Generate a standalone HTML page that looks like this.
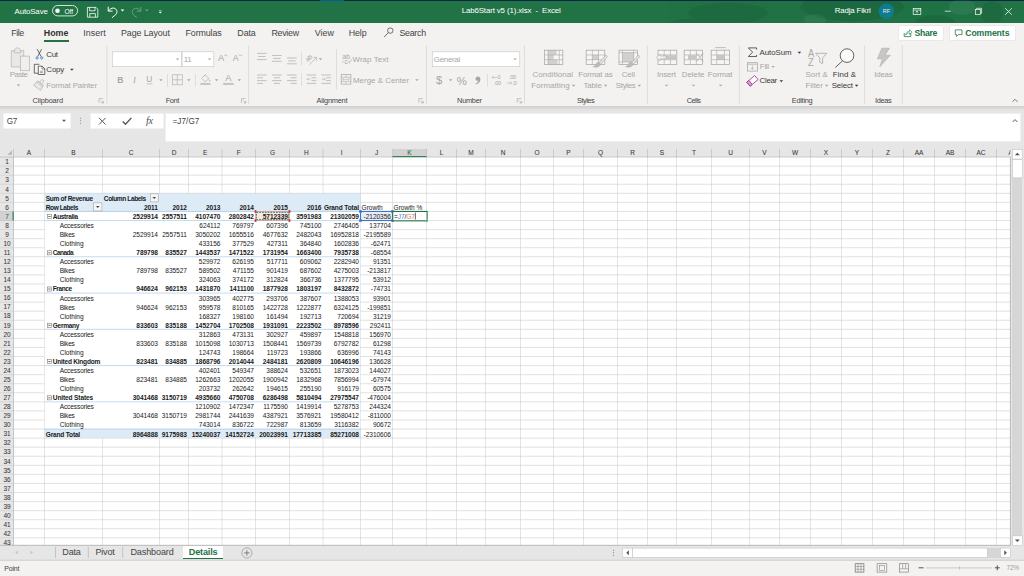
<!DOCTYPE html>
<html><head><meta charset="utf-8"><title>Lab6Start v5 (1).xlsx - Excel</title>
<style>
html,body{margin:0;padding:0;background:#fff;overflow:hidden}
#app{position:relative;width:1024px;height:576px;overflow:hidden;background:#e6e6e6;font-family:"Liberation Sans",sans-serif}
.t{position:absolute;white-space:pre}
.b{position:absolute}
#ov{position:absolute;left:0;top:0;width:1024px;height:576px;pointer-events:none}
</style></head><body>
<div id="app">
<div class="b" style="left:0.00px;top:0.00px;width:1024.00px;height:1.00px;background:#06294a;"></div>
<div class="b" style="left:320.00px;top:0.00px;width:23.70px;height:1.00px;background:#0a5aa0;"></div>
<div class="b" style="left:0.00px;top:0.90px;width:1024.00px;height:21.90px;background:#217346;"></div>
<div class="b" style="left:0.00px;top:22.80px;width:1024.00px;height:82.80px;background:#f3f2f1;"></div>
<div class="b" style="left:0.00px;top:105.60px;width:1024.00px;height:51.40px;background:#e6e6e6;"></div>
<div class="b" style="left:0.00px;top:105.80px;width:1024.00px;height:5.70px;background:linear-gradient(#cdcdcd,#dbdbdb 45%,#e6e6e6);"></div>
<div class="b" style="left:43.50px;top:40.00px;width:25.90px;height:1.90px;background:#217346;"></div>
<div class="b" style="left:899.10px;top:26.00px;width:44.20px;height:14.30px;background:#fff;border-radius:1px;box-shadow:0 0 0 0.5px #e1dfdd"></div>
<div class="b" style="left:949.80px;top:26.00px;width:65.60px;height:14.30px;background:#fff;border-radius:1px;box-shadow:0 0 0 0.5px #e1dfdd"></div>
<div class="b" style="left:13.50px;top:157.05px;width:996.90px;height:388.25px;background:#fff;"></div>
<div class="b" style="left:44.50px;top:193.32px;width:316.00px;height:18.13px;background:#ddebf7;"></div>
<div class="b" style="left:44.50px;top:429.05px;width:316.00px;height:9.07px;background:#ddebf7;"></div>
<div class="b" style="left:392.50px;top:148.60px;width:34.00px;height:8.45px;background:#d2d2d2;"></div>
<div class="b" style="left:0.00px;top:211.45px;width:13.50px;height:9.07px;background:#d2d2d2;"></div>
<div class="b" style="left:360.50px;top:211.45px;width:32.00px;height:9.07px;background:#e8eef9;"></div>
<div class="b" style="left:1012.40px;top:149.40px;width:9.90px;height:395.90px;background:#d6d6d6;"></div>
<div class="b" style="left:622.30px;top:548.00px;width:388.10px;height:9.50px;background:#d6d6d6;"></div>
<div class="b" style="left:0.00px;top:560.50px;width:1024.00px;height:15.50px;background:#f3f2f1;"></div>
<div class="b" style="left:182.50px;top:545.70px;width:40.90px;height:13.50px;background:#fff;"></div>
<div class="b" style="left:182.50px;top:558.00px;width:40.90px;height:1.30px;background:#217346;"></div>
<svg id="ov" viewBox="0 0 1024 576">
<svg x="0" y="0" width="1024" height="22.8" viewBox="0 0 1024 22.8"><g opacity="0.075" fill="#000"><ellipse cx="728" cy="13" rx="40" ry="10.5"/><ellipse cx="852" cy="7" rx="52" ry="14"/><ellipse cx="935" cy="23" rx="20" ry="8"/><ellipse cx="992" cy="13" rx="11" ry="12"/><ellipse cx="700" cy="24" rx="30" ry="6"/></g>
<g opacity="0.05" fill="#fff"><ellipse cx="815" cy="20" rx="11" ry="6"/><ellipse cx="962" cy="7" rx="13" ry="8"/></g></svg>
<rect x="52.50" y="5.50" width="25.10" height="10.40" fill="none" stroke="#ffffff" stroke-width="0.80" rx="5.2"/>
<circle cx="57.50" cy="10.75" r="2.30" fill="#ffffff" stroke="none" stroke-width="0.55" />
<path d="M87.4 7.4h8.6l1.8 1.8v8h-10.4z" fill="none" stroke="#ffffff" stroke-width="0.80" />
<path d="M89.6 7.4v3.4h5.4v-3.4" fill="none" stroke="#ffffff" stroke-width="0.80" />
<path d="M89.8 17.2v-3.6h5.6v3.6" fill="none" stroke="#ffffff" stroke-width="0.80" />
<path d="M108.2 6.7v4.4h4.4" fill="none" stroke="#ffffff" stroke-width="1.00" />
<path d="M108.6 10.9c1.6-2.8 5.2-3.8 7.2-1.8c2 2 1.2 4.6-0.8 6.2l-3 2.4" fill="none" stroke="#ffffff" stroke-width="1.00" />
<path d="M120.70 9.40 h3.60 l-1.80 2.00 z" fill="#ffffff" stroke="none" stroke-width="0.55" />
<g opacity="0.35">
<path d="M140.8 6.9v4.2h-4.2" fill="none" stroke="#ffffff" stroke-width="0.90" />
<path d="M140.4 10.9c-1.6-2.6-5-3.6-7-1.6c-2 2-1.2 4.6 0.8 6.2l2.6 2" fill="none" stroke="#ffffff" stroke-width="0.90" />
<path d="M145.00 9.40 h3.60 l-1.80 2.00 z" fill="#ffffff" stroke="none" stroke-width="0.55" />
</g>
<line x1="158.90" y1="10.90" x2="161.70" y2="10.90" stroke="#ffffff" stroke-width="0.70" />
<path d="M158.90 12.05 h2.80 l-1.40 1.50 z" fill="#ffffff" stroke="none" stroke-width="0.55" />
<circle cx="886.40" cy="11.30" r="7.80" fill="#0e7c8c" stroke="none" stroke-width="0.55" />
<rect x="913.20" y="8.40" width="7.60" height="6.10" fill="none" stroke="#ffffff" stroke-width="0.70" />
<line x1="913.20" y1="10.10" x2="920.80" y2="10.10" stroke="#ffffff" stroke-width="0.70" />
<path d="M917 13.6v-2.6m-1.2 1.2l1.2-1.2l1.2 1.2" fill="none" stroke="#ffffff" stroke-width="0.60" />
<line x1="944.80" y1="11.20" x2="950.80" y2="11.20" stroke="#ffffff" stroke-width="0.70" />
<rect x="975.30" y="9.60" width="5.00" height="5.00" fill="none" stroke="#ffffff" stroke-width="0.70" />
<path d="M976.6 9.6v-1.3h5v5h-1.3" fill="none" stroke="#ffffff" stroke-width="0.70" />
<path d="M1005.2 8.2l6.6 6.6m0-6.6l-6.6 6.6" fill="none" stroke="#ffffff" stroke-width="0.75" />
<circle cx="390.30" cy="30.60" r="2.70" fill="none" stroke="#444444" stroke-width="0.75" />
<line x1="388.40" y1="32.60" x2="384.20" y2="37.00" stroke="#444444" stroke-width="0.75" />
<path d="M904.2 33v3.6h6.6v-3.2" fill="none" stroke="#217346" stroke-width="0.75" />
<path d="M905.6 35.2c0.4-2.6 2-3.8 4-3.9v-1.6l2.4 2.4l-2.4 2.4v-1.6c-1.6 0-3 0.6-4 2.3z" fill="none" stroke="#217346" stroke-width="0.60" />
<path d="M955.3 29.9h6.7v4.7h-3.6l-1.8 1.8v-1.8h-1.3z" fill="none" stroke="#217346" stroke-width="0.75" />
<line x1="106.90" y1="45.30" x2="106.90" y2="103.80" stroke="#d0cecc" stroke-width="0.60" />
<line x1="248.60" y1="45.30" x2="248.60" y2="103.80" stroke="#d0cecc" stroke-width="0.60" />
<line x1="426.50" y1="45.30" x2="426.50" y2="103.80" stroke="#d0cecc" stroke-width="0.60" />
<line x1="524.50" y1="45.30" x2="524.50" y2="103.80" stroke="#d0cecc" stroke-width="0.60" />
<line x1="647.40" y1="45.30" x2="647.40" y2="103.80" stroke="#d0cecc" stroke-width="0.60" />
<line x1="739.40" y1="45.30" x2="739.40" y2="103.80" stroke="#d0cecc" stroke-width="0.60" />
<line x1="864.60" y1="45.30" x2="864.60" y2="103.80" stroke="#d0cecc" stroke-width="0.60" />
<line x1="902.30" y1="45.30" x2="902.30" y2="103.80" stroke="#d0cecc" stroke-width="0.60" />
<path d="M11.3 50.6h3.2c0.3-1.8 1.4-2.7 3-2.7s2.7 0.9 3 2.7h3.2v16.4h-12.4z" fill="#e9e8e7" stroke="#b4b2b0" stroke-width="0.70" />
<path d="M14.3 50.6v2.2h6.4v-2.2" fill="none" stroke="#b4b2b0" stroke-width="0.70" />
<rect x="20.60" y="56.10" width="9.00" height="14.60" fill="#f0efee" stroke="#b4b2b0" stroke-width="0.70" />
<path d="M16.80 84.55 h3.40 l-1.70 1.90 z" fill="#a6a6a6" stroke="none" stroke-width="0.55" />
<path d="M37.2 49.2l4 7.4M41.6 49.2l-4 7.4" fill="none" stroke="#3b3a39" stroke-width="0.75" />
<circle cx="37.10" cy="57.90" r="1.15" fill="none" stroke="#2b7cd3" stroke-width="0.80" />
<circle cx="41.70" cy="57.90" r="1.15" fill="none" stroke="#2b7cd3" stroke-width="0.80" />
<path d="M38 73.2h-3.7v-8.9h5" fill="none" stroke="#3b3a39" stroke-width="0.75" />
<path d="M38.3 66.2h3.9l2.6 2.6v5.7h-6.5z" fill="#fff" stroke="#3b3a39" stroke-width="0.75" />
<path d="M42 66.3v2.7h2.7" fill="none" stroke="#3b3a39" stroke-width="0.60" />
<line x1="39.80" y1="71.20" x2="43.20" y2="71.20" stroke="#3b3a39" stroke-width="0.50" />
<line x1="39.80" y1="72.70" x2="43.20" y2="72.70" stroke="#3b3a39" stroke-width="0.50" />
<path d="M70.10 68.70 h3.60 l-1.80 2.00 z" fill="#3b3a39" stroke="none" stroke-width="0.55" />
<g transform="translate(39.6,84.4) rotate(38)">
<rect x="-1.30" y="-5.40" width="2.60" height="3.80" fill="none" stroke="#b4b2b0" stroke-width="0.70" />
<path d="M-3.8 -1.6h7.6v2.2h-7.6z" fill="#dcdad8" stroke="#b4b2b0" stroke-width="0.70" />
<path d="M-3.8 0.6l-0.6 3.6h8.8l-0.6-3.6" fill="#eceae8" stroke="#b4b2b0" stroke-width="0.70" />
</g>
<path d="M99.00 102.80v-4.2h4.2" fill="none" stroke="#a19f9d" stroke-width="0.60" />
<path d="M100.80 100.40l2.6 2.6m0-2v2h-2" fill="none" stroke="#a19f9d" stroke-width="0.60" />
<rect x="112.50" y="51.80" width="68.80" height="14.90" fill="#fff" stroke="#c8c6c4" stroke-width="0.60" />
<rect x="182.10" y="51.80" width="31.70" height="14.90" fill="#fff" stroke="#c8c6c4" stroke-width="0.60" />
<path d="M175.80 58.45 h3.40 l-1.70 1.90 z" fill="#a6a6a6" stroke="none" stroke-width="0.55" />
<path d="M207.90 58.45 h3.40 l-1.70 1.90 z" fill="#a6a6a6" stroke="none" stroke-width="0.55" />
<path d="M224.3 56.2l1.5-1.5l1.5 1.5" fill="none" stroke="#a6a6a6" stroke-width="0.70" />
<path d="M239 54.6l1.5 1.5l1.5-1.5" fill="none" stroke="#a6a6a6" stroke-width="0.70" />
<line x1="146.50" y1="83.80" x2="152.50" y2="83.80" stroke="#a6a6a6" stroke-width="0.60" />
<path d="M159.20 79.35 h3.40 l-1.70 1.90 z" fill="#a6a6a6" stroke="none" stroke-width="0.55" />
<line x1="167.50" y1="74.00" x2="167.50" y2="86.50" stroke="#d0cecc" stroke-width="0.60" />
<rect x="172.30" y="74.80" width="10.00" height="10.00" fill="none" stroke="#b4b2b0" stroke-width="0.70" />
<line x1="177.30" y1="74.80" x2="177.30" y2="84.80" stroke="#b4b2b0" stroke-width="0.70" />
<line x1="172.30" y1="79.80" x2="182.30" y2="79.80" stroke="#b4b2b0" stroke-width="0.70" />
<path d="M187.10 79.35 h3.40 l-1.70 1.90 z" fill="#a6a6a6" stroke="none" stroke-width="0.55" />
<line x1="195.50" y1="74.00" x2="195.50" y2="86.50" stroke="#d0cecc" stroke-width="0.60" />
<path d="M205.2 74.8l3.8 3.8l-4 3.2l-3.4-3.4z" fill="none" stroke="#b4b2b0" stroke-width="0.75" />
<path d="M203.4 76.6l2.2-2.2" fill="none" stroke="#b4b2b0" stroke-width="0.70" />
<path d="M209.6 79.2c0.8 1 1 1.6 0.5 2.2c-0.5 0.4-1.1 0-1-0.8z" fill="#b4b2b0" stroke="none" stroke-width="0.55" />
<rect x="200.30" y="82.90" width="10.20" height="2.10" fill="#c8c6c4" stroke="none" stroke-width="0.55" />
<path d="M214.80 79.35 h3.40 l-1.70 1.90 z" fill="#a6a6a6" stroke="none" stroke-width="0.55" />
<rect x="223.10" y="82.90" width="10.50" height="2.10" fill="#c8c6c4" stroke="none" stroke-width="0.55" />
<path d="M237.60 79.35 h3.40 l-1.70 1.90 z" fill="#a6a6a6" stroke="none" stroke-width="0.55" />
<path d="M241.40 102.80v-4.2h4.2" fill="none" stroke="#a19f9d" stroke-width="0.60" />
<path d="M243.20 100.40l2.6 2.6m0-2v2h-2" fill="none" stroke="#a19f9d" stroke-width="0.60" />
<line x1="257.00" y1="53.40" x2="266.70" y2="53.40" stroke="#a8a6a4" stroke-width="0.65" />
<line x1="258.16" y1="56.50" x2="265.54" y2="56.50" stroke="#a8a6a4" stroke-width="0.65" />
<line x1="257.00" y1="59.60" x2="266.70" y2="59.60" stroke="#a8a6a4" stroke-width="0.65" />
<line x1="272.00" y1="55.50" x2="281.70" y2="55.50" stroke="#a8a6a4" stroke-width="0.65" />
<line x1="273.16" y1="58.40" x2="280.54" y2="58.40" stroke="#a8a6a4" stroke-width="0.65" />
<line x1="272.00" y1="61.30" x2="281.70" y2="61.30" stroke="#a8a6a4" stroke-width="0.65" />
<line x1="287.00" y1="58.00" x2="296.70" y2="58.00" stroke="#a8a6a4" stroke-width="0.65" />
<line x1="288.16" y1="60.90" x2="295.54" y2="60.90" stroke="#a8a6a4" stroke-width="0.65" />
<line x1="287.00" y1="63.80" x2="296.70" y2="63.80" stroke="#a8a6a4" stroke-width="0.65" />
<line x1="301.50" y1="52.50" x2="301.50" y2="65.30" stroke="#d0cecc" stroke-width="0.60" />
<g transform="translate(311.2,58.2) rotate(-45)">
<text x="-5.4" y="0.4" font-size="6.6" fill="#a8a6a4" font-family="Liberation Sans,sans-serif">ab</text>
</g>
<path d="M309.4 64.6l7-7m-3-0.2h3.2v3.2" fill="none" stroke="#a8a6a4" stroke-width="0.60" />
<path d="M318.80 58.25 h3.40 l-1.70 1.90 z" fill="#a6a6a6" stroke="none" stroke-width="0.55" />
<line x1="257.00" y1="75.00" x2="266.70" y2="75.00" stroke="#a8a6a4" stroke-width="0.65" />
<line x1="257.00" y1="77.80" x2="263.01" y2="77.80" stroke="#a8a6a4" stroke-width="0.65" />
<line x1="257.00" y1="80.60" x2="266.70" y2="80.60" stroke="#a8a6a4" stroke-width="0.65" />
<line x1="257.00" y1="83.40" x2="263.01" y2="83.40" stroke="#a8a6a4" stroke-width="0.65" />
<line x1="272.00" y1="75.00" x2="281.70" y2="75.00" stroke="#a8a6a4" stroke-width="0.65" />
<line x1="273.84" y1="77.80" x2="279.86" y2="77.80" stroke="#a8a6a4" stroke-width="0.65" />
<line x1="272.00" y1="80.60" x2="281.70" y2="80.60" stroke="#a8a6a4" stroke-width="0.65" />
<line x1="273.84" y1="83.40" x2="279.86" y2="83.40" stroke="#a8a6a4" stroke-width="0.65" />
<line x1="287.00" y1="75.00" x2="296.70" y2="75.00" stroke="#a8a6a4" stroke-width="0.65" />
<line x1="290.69" y1="77.80" x2="296.70" y2="77.80" stroke="#a8a6a4" stroke-width="0.65" />
<line x1="287.00" y1="80.60" x2="296.70" y2="80.60" stroke="#a8a6a4" stroke-width="0.65" />
<line x1="290.69" y1="83.40" x2="296.70" y2="83.40" stroke="#a8a6a4" stroke-width="0.65" />
<line x1="301.50" y1="73.40" x2="301.50" y2="85.90" stroke="#d0cecc" stroke-width="0.60" />
<line x1="306.80" y1="75.00" x2="316.20" y2="75.00" stroke="#a8a6a4" stroke-width="0.65" />
<line x1="306.80" y1="83.40" x2="316.20" y2="83.40" stroke="#a8a6a4" stroke-width="0.65" />
<line x1="311.40" y1="77.80" x2="316.20" y2="77.80" stroke="#a8a6a4" stroke-width="0.65" />
<line x1="311.40" y1="80.60" x2="316.20" y2="80.60" stroke="#a8a6a4" stroke-width="0.65" />
<path d="M310.40 79.2h-3.4m1.3-1.3l-1.3 1.3l1.3 1.3" fill="none" stroke="#a8a6a4" stroke-width="0.55" />
<line x1="321.50" y1="75.00" x2="330.90" y2="75.00" stroke="#a8a6a4" stroke-width="0.65" />
<line x1="321.50" y1="83.40" x2="330.90" y2="83.40" stroke="#a8a6a4" stroke-width="0.65" />
<line x1="326.10" y1="77.80" x2="330.90" y2="77.80" stroke="#a8a6a4" stroke-width="0.65" />
<line x1="326.10" y1="80.60" x2="330.90" y2="80.60" stroke="#a8a6a4" stroke-width="0.65" />
<path d="M321.70 79.2h3.4m-1.3-1.3l1.3 1.3l-1.3 1.3" fill="none" stroke="#a8a6a4" stroke-width="0.55" />
<line x1="336.50" y1="49.30" x2="336.50" y2="89.30" stroke="#d0cecc" stroke-width="0.60" />
<text x="342.6" y="59.2" font-size="6.6" fill="#a8a6a4" font-family="Liberation Sans,sans-serif">ab</text>
<text x="344.4" y="64.2" font-size="6.6" fill="#a8a6a4" font-family="Liberation Sans,sans-serif">c</text>
<path d="M350.4 58.6c1.6 1.4 0.8 3.6-1.6 3.6m1.2-1.2l-1.3 1.3l1.3 1.3" fill="none" stroke="#a8a6a4" stroke-width="0.55" />
<path d="M343.6 60.6l-1.3 1.3l1.3 1.3" fill="none" stroke="#a8a6a4" stroke-width="0.55" />
<rect x="341.20" y="74.50" width="9.70" height="9.60" fill="none" stroke="#a8a6a4" stroke-width="0.70" />
<line x1="341.20" y1="77.20" x2="350.90" y2="77.20" stroke="#a8a6a4" stroke-width="0.55" />
<line x1="341.20" y1="81.40" x2="350.90" y2="81.40" stroke="#a8a6a4" stroke-width="0.55" />
<line x1="346.00" y1="74.50" x2="346.00" y2="77.20" stroke="#a8a6a4" stroke-width="0.50" />
<line x1="346.00" y1="81.40" x2="346.00" y2="84.10" stroke="#a8a6a4" stroke-width="0.50" />
<path d="M342.6 79.3h6.8m-5.7-1l-1.1 1l1.1 1m4.6-2l1.1 1l-1.1 1" fill="none" stroke="#a8a6a4" stroke-width="0.50" />
<path d="M415.20 79.15 h3.40 l-1.70 1.90 z" fill="#a6a6a6" stroke="none" stroke-width="0.55" />
<path d="M418.80 102.80v-4.2h4.2" fill="none" stroke="#a19f9d" stroke-width="0.60" />
<path d="M420.60 100.40l2.6 2.6m0-2v2h-2" fill="none" stroke="#a19f9d" stroke-width="0.60" />
<rect x="432.30" y="51.80" width="87.50" height="14.90" fill="#fff" stroke="#c8c6c4" stroke-width="0.60" />
<path d="M513.30 58.45 h3.40 l-1.70 1.90 z" fill="#a6a6a6" stroke="none" stroke-width="0.55" />
<path d="M448.90 79.35 h3.40 l-1.70 1.90 z" fill="#a6a6a6" stroke="none" stroke-width="0.55" />
<path d="M477.9 76.4c1.6 0 2.5 1.1 2.5 2.9c0 2.4-1.6 4.4-4.6 5.1l-0.3-0.9c1.7-0.6 2.6-1.6 2.7-2.7c-1.4 0.3-2.7-0.6-2.7-2.1c0-1.3 1-2.3 2.4-2.3z" fill="#a6a6a6" stroke="none" stroke-width="0.55" />
<line x1="487.50" y1="74.00" x2="487.50" y2="86.50" stroke="#d0cecc" stroke-width="0.60" />
<g font-family="Liberation Sans,sans-serif" font-size="5.6" fill="#a8a6a4" letter-spacing="-0.35">
<text x="497.6" y="79.4">0</text><text x="494" y="84.9">.00</text>
<text x="509" y="79.4">.00</text><text x="512.4" y="84.9">.0</text>
</g>
<path d="M497 77.4h-4.8m1.4-1.4l-1.4 1.4l1.4 1.4" fill="none" stroke="#a8a6a4" stroke-width="0.55" />
<path d="M507 83h4.8m-1.4-1.4l1.4 1.4l-1.4 1.4" fill="none" stroke="#a8a6a4" stroke-width="0.55" />
<path d="M517.20 102.80v-4.2h4.2" fill="none" stroke="#a19f9d" stroke-width="0.60" />
<path d="M519.00 100.40l2.6 2.6m0-2v2h-2" fill="none" stroke="#a19f9d" stroke-width="0.60" />
<rect x="544.40" y="50.20" width="18.40" height="14.40" fill="#f7f6f5" stroke="none" stroke-width="0.55" />
<rect x="548.00" y="50.20" width="8.60" height="4.70" fill="#d2d0ce" stroke="none" stroke-width="0.55" />
<rect x="548.00" y="54.90" width="5.60" height="4.90" fill="#d2d0ce" stroke="none" stroke-width="0.55" />
<rect x="548.00" y="59.80" width="9.60" height="4.80" fill="#d2d0ce" stroke="none" stroke-width="0.55" />
<rect x="544.40" y="50.20" width="18.40" height="14.40" fill="none" stroke="#a8a6a4" stroke-width="0.75" />
<line x1="547.99" y1="50.20" x2="547.99" y2="64.60" stroke="#a8a6a4" stroke-width="0.60" />
<line x1="559.30" y1="50.20" x2="559.30" y2="64.60" stroke="#a8a6a4" stroke-width="0.60" />
<line x1="544.40" y1="54.95" x2="562.80" y2="54.95" stroke="#a8a6a4" stroke-width="0.60" />
<line x1="544.40" y1="59.70" x2="562.80" y2="59.70" stroke="#a8a6a4" stroke-width="0.60" />
<rect x="586.20" y="50.20" width="18.60" height="14.40" fill="#f7f6f5" stroke="none" stroke-width="0.55" />
<rect x="592.40" y="55.00" width="6.20" height="4.60" fill="#d2d0ce" stroke="none" stroke-width="0.55" />
<rect x="586.20" y="50.20" width="18.60" height="14.40" fill="none" stroke="#a8a6a4" stroke-width="0.75" />
<line x1="592.34" y1="50.20" x2="592.34" y2="64.60" stroke="#a8a6a4" stroke-width="0.60" />
<line x1="598.48" y1="50.20" x2="598.48" y2="64.60" stroke="#a8a6a4" stroke-width="0.60" />
<line x1="586.20" y1="54.95" x2="604.80" y2="54.95" stroke="#a8a6a4" stroke-width="0.60" />
<line x1="586.20" y1="59.70" x2="604.80" y2="59.70" stroke="#a8a6a4" stroke-width="0.60" />
<path d="M605.80 55.00l1.6 1.4l-6.8 8.2l-1.8-1.5z" fill="#e6e4e2" stroke="#a8a6a4" stroke-width="0.60" />
<path d="M600.70 64.30c-0.8 2.4-3.8 3.4-7.6 2.5c1.6-0.4 2.3-1.2 2.7-2.5c0.6-1.8 2.3-2.5 3.5-1.7z" fill="#bdbbb9" stroke="#a8a6a4" stroke-width="0.45" />
<rect x="619.00" y="50.20" width="18.40" height="14.40" fill="#f7f6f5" stroke="none" stroke-width="0.55" />
<rect x="622.60" y="52.60" width="11.20" height="9.40" fill="#d2d0ce" stroke="none" stroke-width="0.55" />
<rect x="619.00" y="50.20" width="18.40" height="14.40" fill="none" stroke="#a8a6a4" stroke-width="0.75" />
<line x1="622.50" y1="50.20" x2="622.50" y2="64.60" stroke="#a8a6a4" stroke-width="0.60" />
<line x1="633.72" y1="50.20" x2="633.72" y2="64.60" stroke="#a8a6a4" stroke-width="0.60" />
<line x1="619.00" y1="52.65" x2="637.40" y2="52.65" stroke="#a8a6a4" stroke-width="0.60" />
<line x1="619.00" y1="62.01" x2="637.40" y2="62.01" stroke="#a8a6a4" stroke-width="0.60" />
<path d="M638.30 55.00l1.6 1.4l-6.8 8.2l-1.8-1.5z" fill="#e6e4e2" stroke="#a8a6a4" stroke-width="0.60" />
<path d="M633.20 64.30c-0.8 2.4-3.8 3.4-7.6 2.5c1.6-0.4 2.3-1.2 2.7-2.5c0.6-1.8 2.3-2.5 3.5-1.7z" fill="#bdbbb9" stroke="#a8a6a4" stroke-width="0.45" />
<path d="M571.90 84.85 h3.40 l-1.70 1.90 z" fill="#a6a6a6" stroke="none" stroke-width="0.55" />
<path d="M603.90 84.85 h3.40 l-1.70 1.90 z" fill="#a6a6a6" stroke="none" stroke-width="0.55" />
<path d="M637.70 84.85 h3.40 l-1.70 1.90 z" fill="#a6a6a6" stroke="none" stroke-width="0.55" />
<rect x="658.00" y="50.20" width="18.80" height="14.40" fill="#f7f6f5" stroke="none" stroke-width="0.55" />
<rect x="658.00" y="50.20" width="18.80" height="14.40" fill="none" stroke="#a8a6a4" stroke-width="0.75" />
<line x1="664.20" y1="50.20" x2="664.20" y2="64.60" stroke="#a8a6a4" stroke-width="0.60" />
<line x1="670.41" y1="50.20" x2="670.41" y2="64.60" stroke="#a8a6a4" stroke-width="0.60" />
<line x1="658.00" y1="54.95" x2="676.80" y2="54.95" stroke="#a8a6a4" stroke-width="0.60" />
<line x1="658.00" y1="59.70" x2="676.80" y2="59.70" stroke="#a8a6a4" stroke-width="0.60" />
<rect x="663.00" y="55.20" width="14.00" height="4.40" fill="#c8c6c4" stroke="none" stroke-width="0.55" />
<path d="M656.4 57.4l3.6-3.4v2h6v2.8h-6v2z" fill="#f3f2f1" stroke="#a8a6a4" stroke-width="0.55" />
<rect x="684.20" y="50.20" width="18.40" height="14.40" fill="#f7f6f5" stroke="none" stroke-width="0.55" />
<rect x="684.20" y="50.20" width="18.40" height="14.40" fill="none" stroke="#a8a6a4" stroke-width="0.75" />
<line x1="690.27" y1="50.20" x2="690.27" y2="64.60" stroke="#a8a6a4" stroke-width="0.60" />
<line x1="696.34" y1="50.20" x2="696.34" y2="64.60" stroke="#a8a6a4" stroke-width="0.60" />
<line x1="684.20" y1="54.95" x2="702.60" y2="54.95" stroke="#a8a6a4" stroke-width="0.60" />
<line x1="684.20" y1="59.70" x2="702.60" y2="59.70" stroke="#a8a6a4" stroke-width="0.60" />
<rect x="688.00" y="55.20" width="8.00" height="4.40" fill="#c8c6c4" stroke="none" stroke-width="0.55" />
<path d="M696.4 53.4l7 8m0-8l-7 8" fill="none" stroke="#a8a6a4" stroke-width="0.70" />
<line x1="715.20" y1="47.60" x2="725.80" y2="47.60" stroke="#a8a6a4" stroke-width="0.70" />
<rect x="711.20" y="50.20" width="18.40" height="14.40" fill="#f7f6f5" stroke="none" stroke-width="0.55" />
<rect x="717.00" y="55.20" width="7.40" height="4.40" fill="#c8c6c4" stroke="none" stroke-width="0.55" />
<rect x="711.20" y="50.20" width="18.40" height="14.40" fill="none" stroke="#a8a6a4" stroke-width="0.75" />
<line x1="716.72" y1="50.20" x2="716.72" y2="64.60" stroke="#a8a6a4" stroke-width="0.60" />
<line x1="724.45" y1="50.20" x2="724.45" y2="64.60" stroke="#a8a6a4" stroke-width="0.60" />
<line x1="711.20" y1="54.95" x2="729.60" y2="54.95" stroke="#a8a6a4" stroke-width="0.60" />
<line x1="711.20" y1="59.70" x2="729.60" y2="59.70" stroke="#a8a6a4" stroke-width="0.60" />
<path d="M664.80 84.65 h3.40 l-1.70 1.90 z" fill="#a6a6a6" stroke="none" stroke-width="0.55" />
<path d="M691.80 84.65 h3.40 l-1.70 1.90 z" fill="#a6a6a6" stroke="none" stroke-width="0.55" />
<path d="M718.90 84.65 h3.40 l-1.70 1.90 z" fill="#a6a6a6" stroke="none" stroke-width="0.55" />
<path d="M756.6 49.6v-1.7h-8.2l4.2 4.3l-4.2 4.3h8.2v-1.7" fill="none" stroke="#3b3a39" stroke-width="0.80" />
<path d="M797.60 51.80 h3.60 l-1.80 2.00 z" fill="#3b3a39" stroke="none" stroke-width="0.55" />
<rect x="747.50" y="62.70" width="9.90" height="8.40" fill="none" stroke="#a8a6a4" stroke-width="0.75" />
<line x1="747.50" y1="64.20" x2="757.40" y2="64.20" stroke="#a8a6a4" stroke-width="0.70" />
<path d="M752.4 65.4v4m-1.5-1.5l1.5 1.5l1.5-1.5" fill="none" stroke="#a8a6a4" stroke-width="0.60" />
<path d="M771.40 65.95 h3.40 l-1.70 1.90 z" fill="#a6a6a6" stroke="none" stroke-width="0.55" />
<g transform="translate(752.4,80.9) rotate(-40)">
<rect x="-5.20" y="-2.60" width="10.40" height="5.20" fill="#fff" stroke="#a4379c" stroke-width="0.80" />
<rect x="-5.20" y="-2.60" width="2.80" height="5.20" fill="#d9a3d5" stroke="#a4379c" stroke-width="0.80" />
</g>
<path d="M779.50 80.20 h3.60 l-1.80 2.00 z" fill="#3b3a39" stroke="none" stroke-width="0.55" />
<path d="M815.6 53.3h11.2l-4.2 4.6v5.6l-2.8-1.2v-4.4z" fill="none" stroke="#a8a6a4" stroke-width="0.80" />
<path d="M824.90 84.85 h3.40 l-1.70 1.90 z" fill="#a6a6a6" stroke="none" stroke-width="0.55" />
<circle cx="847.00" cy="55.60" r="6.80" fill="#fafafa" stroke="#3b3a39" stroke-width="0.80" />
<line x1="842.60" y1="60.80" x2="835.40" y2="67.40" stroke="#3b3a39" stroke-width="0.80" />
<path d="M854.80 84.80 h3.60 l-1.80 2.00 z" fill="#3b3a39" stroke="none" stroke-width="0.55" />
<path d="M881.8 48.2h7.6l-4.4 7h5.4l-10.6 11.6l2.6-8h-5z" fill="#c8c6c4" stroke="#a8a6a4" stroke-width="0.50" />
<path d="M1012.4 101.9l2.6-2.6l2.6 2.6" fill="none" stroke="#605e5c" stroke-width="0.80" />
<rect x="3.50" y="113.50" width="67.10" height="15.00" fill="#fff" stroke="#f2f2f2" stroke-width="0.40" />
<rect x="90.60" y="113.50" width="72.90" height="15.00" fill="#fff" stroke="#f2f2f2" stroke-width="0.40" />
<rect x="165.70" y="113.60" width="854.70" height="27.70" fill="#fff" stroke="#f2f2f2" stroke-width="0.40" />
<path d="M62.00 119.70 h4.00 l-2.00 2.20 z" fill="#605e5c" stroke="none" stroke-width="0.55" />
<circle cx="80.60" cy="118.20" r="0.55" fill="#7a7876" stroke="none" stroke-width="0.55" />
<circle cx="80.60" cy="120.70" r="0.55" fill="#7a7876" stroke="none" stroke-width="0.55" />
<circle cx="80.60" cy="123.20" r="0.55" fill="#7a7876" stroke="none" stroke-width="0.55" />
<path d="M99 117.9l6.6 6.6m0-6.6l-6.6 6.6" fill="none" stroke="#555" stroke-width="1.00" />
<path d="M122.8 121.4l2.7 2.9l5.9-6.4" fill="none" stroke="#555" stroke-width="1.40" />
<path d="M1012.6 122l2.4-2.4l2.4 2.4" fill="none" stroke="#605e5c" stroke-width="1.00" />
<line x1="44.50" y1="157.05" x2="44.50" y2="545.30" stroke="#d0d0d0" stroke-width="0.58" />
<line x1="102.50" y1="157.05" x2="102.50" y2="545.30" stroke="#d0d0d0" stroke-width="0.58" />
<line x1="159.50" y1="157.05" x2="159.50" y2="545.30" stroke="#d0d0d0" stroke-width="0.58" />
<line x1="188.50" y1="157.05" x2="188.50" y2="545.30" stroke="#d0d0d0" stroke-width="0.58" />
<line x1="222.00" y1="157.05" x2="222.00" y2="545.30" stroke="#d0d0d0" stroke-width="0.58" />
<line x1="255.50" y1="157.05" x2="255.50" y2="545.30" stroke="#d0d0d0" stroke-width="0.58" />
<line x1="289.50" y1="157.05" x2="289.50" y2="545.30" stroke="#d0d0d0" stroke-width="0.58" />
<line x1="323.00" y1="157.05" x2="323.00" y2="545.30" stroke="#d0d0d0" stroke-width="0.58" />
<line x1="360.50" y1="157.05" x2="360.50" y2="545.30" stroke="#d0d0d0" stroke-width="0.58" />
<line x1="392.50" y1="157.05" x2="392.50" y2="545.30" stroke="#d0d0d0" stroke-width="0.58" />
<line x1="426.50" y1="157.05" x2="426.50" y2="545.30" stroke="#d0d0d0" stroke-width="0.58" />
<line x1="456.50" y1="157.05" x2="456.50" y2="545.30" stroke="#d0d0d0" stroke-width="0.58" />
<line x1="485.50" y1="157.05" x2="485.50" y2="545.30" stroke="#d0d0d0" stroke-width="0.58" />
<line x1="520.50" y1="157.05" x2="520.50" y2="545.30" stroke="#d0d0d0" stroke-width="0.58" />
<line x1="553.50" y1="157.05" x2="553.50" y2="545.30" stroke="#d0d0d0" stroke-width="0.58" />
<line x1="583.50" y1="157.05" x2="583.50" y2="545.30" stroke="#d0d0d0" stroke-width="0.58" />
<line x1="617.50" y1="157.05" x2="617.50" y2="545.30" stroke="#d0d0d0" stroke-width="0.58" />
<line x1="647.50" y1="157.05" x2="647.50" y2="545.30" stroke="#d0d0d0" stroke-width="0.58" />
<line x1="676.50" y1="157.05" x2="676.50" y2="545.30" stroke="#d0d0d0" stroke-width="0.58" />
<line x1="711.50" y1="157.05" x2="711.50" y2="545.30" stroke="#d0d0d0" stroke-width="0.58" />
<line x1="749.50" y1="157.05" x2="749.50" y2="545.30" stroke="#d0d0d0" stroke-width="0.58" />
<line x1="779.50" y1="157.05" x2="779.50" y2="545.30" stroke="#d0d0d0" stroke-width="0.58" />
<line x1="810.50" y1="157.05" x2="810.50" y2="545.30" stroke="#d0d0d0" stroke-width="0.58" />
<line x1="841.50" y1="157.05" x2="841.50" y2="545.30" stroke="#d0d0d0" stroke-width="0.58" />
<line x1="872.50" y1="157.05" x2="872.50" y2="545.30" stroke="#d0d0d0" stroke-width="0.58" />
<line x1="903.50" y1="157.05" x2="903.50" y2="545.30" stroke="#d0d0d0" stroke-width="0.58" />
<line x1="934.50" y1="157.05" x2="934.50" y2="545.30" stroke="#d0d0d0" stroke-width="0.58" />
<line x1="965.50" y1="157.05" x2="965.50" y2="545.30" stroke="#d0d0d0" stroke-width="0.58" />
<line x1="996.50" y1="157.05" x2="996.50" y2="545.30" stroke="#d0d0d0" stroke-width="0.58" />
<line x1="13.50" y1="166.12" x2="1010.40" y2="166.12" stroke="#cecece" stroke-width="0.62" />
<line x1="13.50" y1="175.18" x2="1010.40" y2="175.18" stroke="#cecece" stroke-width="0.62" />
<line x1="13.50" y1="184.25" x2="1010.40" y2="184.25" stroke="#cecece" stroke-width="0.62" />
<line x1="13.50" y1="193.32" x2="1010.40" y2="193.32" stroke="#cecece" stroke-width="0.62" />
<line x1="13.50" y1="202.38" x2="1010.40" y2="202.38" stroke="#cecece" stroke-width="0.62" />
<line x1="13.50" y1="211.45" x2="1010.40" y2="211.45" stroke="#cecece" stroke-width="0.62" />
<line x1="13.50" y1="220.52" x2="1010.40" y2="220.52" stroke="#cecece" stroke-width="0.62" />
<line x1="13.50" y1="229.58" x2="1010.40" y2="229.58" stroke="#cecece" stroke-width="0.62" />
<line x1="13.50" y1="238.65" x2="1010.40" y2="238.65" stroke="#cecece" stroke-width="0.62" />
<line x1="13.50" y1="247.72" x2="1010.40" y2="247.72" stroke="#cecece" stroke-width="0.62" />
<line x1="13.50" y1="256.78" x2="1010.40" y2="256.78" stroke="#cecece" stroke-width="0.62" />
<line x1="13.50" y1="265.85" x2="1010.40" y2="265.85" stroke="#cecece" stroke-width="0.62" />
<line x1="13.50" y1="274.92" x2="1010.40" y2="274.92" stroke="#cecece" stroke-width="0.62" />
<line x1="13.50" y1="283.98" x2="1010.40" y2="283.98" stroke="#cecece" stroke-width="0.62" />
<line x1="13.50" y1="293.05" x2="1010.40" y2="293.05" stroke="#cecece" stroke-width="0.62" />
<line x1="13.50" y1="302.12" x2="1010.40" y2="302.12" stroke="#cecece" stroke-width="0.62" />
<line x1="13.50" y1="311.18" x2="1010.40" y2="311.18" stroke="#cecece" stroke-width="0.62" />
<line x1="13.50" y1="320.25" x2="1010.40" y2="320.25" stroke="#cecece" stroke-width="0.62" />
<line x1="13.50" y1="329.32" x2="1010.40" y2="329.32" stroke="#cecece" stroke-width="0.62" />
<line x1="13.50" y1="338.38" x2="1010.40" y2="338.38" stroke="#cecece" stroke-width="0.62" />
<line x1="13.50" y1="347.45" x2="1010.40" y2="347.45" stroke="#cecece" stroke-width="0.62" />
<line x1="13.50" y1="356.52" x2="1010.40" y2="356.52" stroke="#cecece" stroke-width="0.62" />
<line x1="13.50" y1="365.58" x2="1010.40" y2="365.58" stroke="#cecece" stroke-width="0.62" />
<line x1="13.50" y1="374.65" x2="1010.40" y2="374.65" stroke="#cecece" stroke-width="0.62" />
<line x1="13.50" y1="383.72" x2="1010.40" y2="383.72" stroke="#cecece" stroke-width="0.62" />
<line x1="13.50" y1="392.78" x2="1010.40" y2="392.78" stroke="#cecece" stroke-width="0.62" />
<line x1="13.50" y1="401.85" x2="1010.40" y2="401.85" stroke="#cecece" stroke-width="0.62" />
<line x1="13.50" y1="410.92" x2="1010.40" y2="410.92" stroke="#cecece" stroke-width="0.62" />
<line x1="13.50" y1="419.98" x2="1010.40" y2="419.98" stroke="#cecece" stroke-width="0.62" />
<line x1="13.50" y1="429.05" x2="1010.40" y2="429.05" stroke="#cecece" stroke-width="0.62" />
<line x1="13.50" y1="438.12" x2="1010.40" y2="438.12" stroke="#cecece" stroke-width="0.62" />
<line x1="13.50" y1="447.18" x2="1010.40" y2="447.18" stroke="#cecece" stroke-width="0.62" />
<line x1="13.50" y1="456.25" x2="1010.40" y2="456.25" stroke="#cecece" stroke-width="0.62" />
<line x1="13.50" y1="465.32" x2="1010.40" y2="465.32" stroke="#cecece" stroke-width="0.62" />
<line x1="13.50" y1="474.38" x2="1010.40" y2="474.38" stroke="#cecece" stroke-width="0.62" />
<line x1="13.50" y1="483.45" x2="1010.40" y2="483.45" stroke="#cecece" stroke-width="0.62" />
<line x1="13.50" y1="492.52" x2="1010.40" y2="492.52" stroke="#cecece" stroke-width="0.62" />
<line x1="13.50" y1="501.58" x2="1010.40" y2="501.58" stroke="#cecece" stroke-width="0.62" />
<line x1="13.50" y1="510.65" x2="1010.40" y2="510.65" stroke="#cecece" stroke-width="0.62" />
<line x1="13.50" y1="519.72" x2="1010.40" y2="519.72" stroke="#cecece" stroke-width="0.62" />
<line x1="13.50" y1="528.78" x2="1010.40" y2="528.78" stroke="#cecece" stroke-width="0.62" />
<line x1="13.50" y1="537.85" x2="1010.40" y2="537.85" stroke="#cecece" stroke-width="0.62" />
<rect x="44.80" y="193.62" width="315.40" height="17.53" fill="#ddebf7"/>
<rect x="44.80" y="429.35" width="315.40" height="8.47" fill="#ddebf7"/>
<rect x="44.80" y="211.75" width="315.40" height="217.00" fill="#fff"/>
<rect x="255.50" y="211.45" width="34.00" height="9.07" fill="#fbe6e1" stroke="none" stroke-width="0.55" />
<line x1="13.50" y1="148.90" x2="13.50" y2="157.05" stroke="#b8b8b8" stroke-width="0.60" />
<line x1="44.50" y1="148.90" x2="44.50" y2="157.05" stroke="#b8b8b8" stroke-width="0.60" />
<line x1="102.50" y1="148.90" x2="102.50" y2="157.05" stroke="#b8b8b8" stroke-width="0.60" />
<line x1="159.50" y1="148.90" x2="159.50" y2="157.05" stroke="#b8b8b8" stroke-width="0.60" />
<line x1="188.50" y1="148.90" x2="188.50" y2="157.05" stroke="#b8b8b8" stroke-width="0.60" />
<line x1="222.00" y1="148.90" x2="222.00" y2="157.05" stroke="#b8b8b8" stroke-width="0.60" />
<line x1="255.50" y1="148.90" x2="255.50" y2="157.05" stroke="#b8b8b8" stroke-width="0.60" />
<line x1="289.50" y1="148.90" x2="289.50" y2="157.05" stroke="#b8b8b8" stroke-width="0.60" />
<line x1="323.00" y1="148.90" x2="323.00" y2="157.05" stroke="#b8b8b8" stroke-width="0.60" />
<line x1="360.50" y1="148.90" x2="360.50" y2="157.05" stroke="#b8b8b8" stroke-width="0.60" />
<line x1="392.50" y1="148.90" x2="392.50" y2="157.05" stroke="#b8b8b8" stroke-width="0.60" />
<line x1="426.50" y1="148.90" x2="426.50" y2="157.05" stroke="#b8b8b8" stroke-width="0.60" />
<line x1="456.50" y1="148.90" x2="456.50" y2="157.05" stroke="#b8b8b8" stroke-width="0.60" />
<line x1="485.50" y1="148.90" x2="485.50" y2="157.05" stroke="#b8b8b8" stroke-width="0.60" />
<line x1="520.50" y1="148.90" x2="520.50" y2="157.05" stroke="#b8b8b8" stroke-width="0.60" />
<line x1="553.50" y1="148.90" x2="553.50" y2="157.05" stroke="#b8b8b8" stroke-width="0.60" />
<line x1="583.50" y1="148.90" x2="583.50" y2="157.05" stroke="#b8b8b8" stroke-width="0.60" />
<line x1="617.50" y1="148.90" x2="617.50" y2="157.05" stroke="#b8b8b8" stroke-width="0.60" />
<line x1="647.50" y1="148.90" x2="647.50" y2="157.05" stroke="#b8b8b8" stroke-width="0.60" />
<line x1="676.50" y1="148.90" x2="676.50" y2="157.05" stroke="#b8b8b8" stroke-width="0.60" />
<line x1="711.50" y1="148.90" x2="711.50" y2="157.05" stroke="#b8b8b8" stroke-width="0.60" />
<line x1="749.50" y1="148.90" x2="749.50" y2="157.05" stroke="#b8b8b8" stroke-width="0.60" />
<line x1="779.50" y1="148.90" x2="779.50" y2="157.05" stroke="#b8b8b8" stroke-width="0.60" />
<line x1="810.50" y1="148.90" x2="810.50" y2="157.05" stroke="#b8b8b8" stroke-width="0.60" />
<line x1="841.50" y1="148.90" x2="841.50" y2="157.05" stroke="#b8b8b8" stroke-width="0.60" />
<line x1="872.50" y1="148.90" x2="872.50" y2="157.05" stroke="#b8b8b8" stroke-width="0.60" />
<line x1="903.50" y1="148.90" x2="903.50" y2="157.05" stroke="#b8b8b8" stroke-width="0.60" />
<line x1="934.50" y1="148.90" x2="934.50" y2="157.05" stroke="#b8b8b8" stroke-width="0.60" />
<line x1="965.50" y1="148.90" x2="965.50" y2="157.05" stroke="#b8b8b8" stroke-width="0.60" />
<line x1="996.50" y1="148.90" x2="996.50" y2="157.05" stroke="#b8b8b8" stroke-width="0.60" />
<line x1="0.00" y1="157.05" x2="1010.40" y2="157.05" stroke="#b0b0b0" stroke-width="0.60" />
<line x1="13.50" y1="157.05" x2="13.50" y2="545.30" stroke="#b0b0b0" stroke-width="0.60" />
<line x1="0.00" y1="166.12" x2="13.50" y2="166.12" stroke="#c6c6c6" stroke-width="0.50" />
<line x1="0.00" y1="175.18" x2="13.50" y2="175.18" stroke="#c6c6c6" stroke-width="0.50" />
<line x1="0.00" y1="184.25" x2="13.50" y2="184.25" stroke="#c6c6c6" stroke-width="0.50" />
<line x1="0.00" y1="193.32" x2="13.50" y2="193.32" stroke="#c6c6c6" stroke-width="0.50" />
<line x1="0.00" y1="202.38" x2="13.50" y2="202.38" stroke="#c6c6c6" stroke-width="0.50" />
<line x1="0.00" y1="211.45" x2="13.50" y2="211.45" stroke="#c6c6c6" stroke-width="0.50" />
<line x1="0.00" y1="220.52" x2="13.50" y2="220.52" stroke="#c6c6c6" stroke-width="0.50" />
<line x1="0.00" y1="229.58" x2="13.50" y2="229.58" stroke="#c6c6c6" stroke-width="0.50" />
<line x1="0.00" y1="238.65" x2="13.50" y2="238.65" stroke="#c6c6c6" stroke-width="0.50" />
<line x1="0.00" y1="247.72" x2="13.50" y2="247.72" stroke="#c6c6c6" stroke-width="0.50" />
<line x1="0.00" y1="256.78" x2="13.50" y2="256.78" stroke="#c6c6c6" stroke-width="0.50" />
<line x1="0.00" y1="265.85" x2="13.50" y2="265.85" stroke="#c6c6c6" stroke-width="0.50" />
<line x1="0.00" y1="274.92" x2="13.50" y2="274.92" stroke="#c6c6c6" stroke-width="0.50" />
<line x1="0.00" y1="283.98" x2="13.50" y2="283.98" stroke="#c6c6c6" stroke-width="0.50" />
<line x1="0.00" y1="293.05" x2="13.50" y2="293.05" stroke="#c6c6c6" stroke-width="0.50" />
<line x1="0.00" y1="302.12" x2="13.50" y2="302.12" stroke="#c6c6c6" stroke-width="0.50" />
<line x1="0.00" y1="311.18" x2="13.50" y2="311.18" stroke="#c6c6c6" stroke-width="0.50" />
<line x1="0.00" y1="320.25" x2="13.50" y2="320.25" stroke="#c6c6c6" stroke-width="0.50" />
<line x1="0.00" y1="329.32" x2="13.50" y2="329.32" stroke="#c6c6c6" stroke-width="0.50" />
<line x1="0.00" y1="338.38" x2="13.50" y2="338.38" stroke="#c6c6c6" stroke-width="0.50" />
<line x1="0.00" y1="347.45" x2="13.50" y2="347.45" stroke="#c6c6c6" stroke-width="0.50" />
<line x1="0.00" y1="356.52" x2="13.50" y2="356.52" stroke="#c6c6c6" stroke-width="0.50" />
<line x1="0.00" y1="365.58" x2="13.50" y2="365.58" stroke="#c6c6c6" stroke-width="0.50" />
<line x1="0.00" y1="374.65" x2="13.50" y2="374.65" stroke="#c6c6c6" stroke-width="0.50" />
<line x1="0.00" y1="383.72" x2="13.50" y2="383.72" stroke="#c6c6c6" stroke-width="0.50" />
<line x1="0.00" y1="392.78" x2="13.50" y2="392.78" stroke="#c6c6c6" stroke-width="0.50" />
<line x1="0.00" y1="401.85" x2="13.50" y2="401.85" stroke="#c6c6c6" stroke-width="0.50" />
<line x1="0.00" y1="410.92" x2="13.50" y2="410.92" stroke="#c6c6c6" stroke-width="0.50" />
<line x1="0.00" y1="419.98" x2="13.50" y2="419.98" stroke="#c6c6c6" stroke-width="0.50" />
<line x1="0.00" y1="429.05" x2="13.50" y2="429.05" stroke="#c6c6c6" stroke-width="0.50" />
<line x1="0.00" y1="438.12" x2="13.50" y2="438.12" stroke="#c6c6c6" stroke-width="0.50" />
<line x1="0.00" y1="447.18" x2="13.50" y2="447.18" stroke="#c6c6c6" stroke-width="0.50" />
<line x1="0.00" y1="456.25" x2="13.50" y2="456.25" stroke="#c6c6c6" stroke-width="0.50" />
<line x1="0.00" y1="465.32" x2="13.50" y2="465.32" stroke="#c6c6c6" stroke-width="0.50" />
<line x1="0.00" y1="474.38" x2="13.50" y2="474.38" stroke="#c6c6c6" stroke-width="0.50" />
<line x1="0.00" y1="483.45" x2="13.50" y2="483.45" stroke="#c6c6c6" stroke-width="0.50" />
<line x1="0.00" y1="492.52" x2="13.50" y2="492.52" stroke="#c6c6c6" stroke-width="0.50" />
<line x1="0.00" y1="501.58" x2="13.50" y2="501.58" stroke="#c6c6c6" stroke-width="0.50" />
<line x1="0.00" y1="510.65" x2="13.50" y2="510.65" stroke="#c6c6c6" stroke-width="0.50" />
<line x1="0.00" y1="519.72" x2="13.50" y2="519.72" stroke="#c6c6c6" stroke-width="0.50" />
<line x1="0.00" y1="528.78" x2="13.50" y2="528.78" stroke="#c6c6c6" stroke-width="0.50" />
<line x1="0.00" y1="537.85" x2="13.50" y2="537.85" stroke="#c6c6c6" stroke-width="0.50" />
<line x1="0.00" y1="545.30" x2="1010.70" y2="545.30" stroke="#a6a6a6" stroke-width="0.70" />
<line x1="1010.40" y1="157.05" x2="1010.40" y2="545.30" stroke="#a6a6a6" stroke-width="0.70" />
<path d="M11.9 150.6v4.2h-4.4z" fill="#b4b4b4" stroke="none" stroke-width="0.55" />
<line x1="392.50" y1="156.65" x2="426.50" y2="156.65" stroke="#217346" stroke-width="1.00" />
<line x1="13.10" y1="211.45" x2="13.10" y2="220.52" stroke="#217346" stroke-width="1.00" />
<line x1="44.50" y1="211.45" x2="360.50" y2="211.45" stroke="#9bc2e6" stroke-width="0.60" />
<line x1="44.50" y1="220.52" x2="360.50" y2="220.52" stroke="#9bc2e6" stroke-width="0.60" />
<line x1="44.50" y1="256.78" x2="360.50" y2="256.78" stroke="#9bc2e6" stroke-width="0.60" />
<line x1="44.50" y1="293.05" x2="360.50" y2="293.05" stroke="#9bc2e6" stroke-width="0.60" />
<line x1="44.50" y1="329.32" x2="360.50" y2="329.32" stroke="#9bc2e6" stroke-width="0.60" />
<line x1="44.50" y1="365.58" x2="360.50" y2="365.58" stroke="#9bc2e6" stroke-width="0.60" />
<line x1="44.50" y1="401.85" x2="360.50" y2="401.85" stroke="#9bc2e6" stroke-width="0.60" />
<line x1="44.50" y1="429.05" x2="360.50" y2="429.05" stroke="#9bc2e6" stroke-width="0.60" />
<rect x="47.40" y="214.45" width="4.10" height="4.10" fill="#fff" stroke="#7a7a7a" stroke-width="0.60" />
<line x1="48.30" y1="216.50" x2="50.60" y2="216.50" stroke="#333" stroke-width="0.70" />
<rect x="47.40" y="250.72" width="4.10" height="4.10" fill="#fff" stroke="#7a7a7a" stroke-width="0.60" />
<line x1="48.30" y1="252.77" x2="50.60" y2="252.77" stroke="#333" stroke-width="0.70" />
<rect x="47.40" y="286.98" width="4.10" height="4.10" fill="#fff" stroke="#7a7a7a" stroke-width="0.60" />
<line x1="48.30" y1="289.03" x2="50.60" y2="289.03" stroke="#333" stroke-width="0.70" />
<rect x="47.40" y="323.25" width="4.10" height="4.10" fill="#fff" stroke="#7a7a7a" stroke-width="0.60" />
<line x1="48.30" y1="325.30" x2="50.60" y2="325.30" stroke="#333" stroke-width="0.70" />
<rect x="47.40" y="359.52" width="4.10" height="4.10" fill="#fff" stroke="#7a7a7a" stroke-width="0.60" />
<line x1="48.30" y1="361.57" x2="50.60" y2="361.57" stroke="#333" stroke-width="0.70" />
<rect x="47.40" y="395.78" width="4.10" height="4.10" fill="#fff" stroke="#7a7a7a" stroke-width="0.60" />
<line x1="48.30" y1="397.83" x2="50.60" y2="397.83" stroke="#333" stroke-width="0.70" />
<rect x="93.60" y="202.88" width="8.30" height="8.07" fill="#f6f6f6" stroke="#a0a0a0" stroke-width="0.55" />
<path d="M95.95 206.12 h3.60 l-1.80 2.00 z" fill="#444" stroke="none" stroke-width="0.55" />
<rect x="150.30" y="193.82" width="7.90" height="8.07" fill="#f6f6f6" stroke="#a0a0a0" stroke-width="0.55" />
<path d="M152.45 197.05 h3.60 l-1.80 2.00 z" fill="#444" stroke="none" stroke-width="0.55" />
<rect x="255.50" y="211.45" width="34.00" height="9.07" fill="none" stroke="#e39a94" stroke-width="0.70" />
<rect x="256.40" y="212.35" width="32.20" height="7.27" fill="none" stroke="#1e6b41" stroke-width="0.85" stroke-dasharray="1.8 1.0"/>
<rect x="254.60" y="210.05" width="1.80" height="2.80" fill="#c8373a" stroke="none" stroke-width="0.55" />
<rect x="288.60" y="210.05" width="1.80" height="2.80" fill="#c8373a" stroke="none" stroke-width="0.55" />
<rect x="254.60" y="219.12" width="1.80" height="2.80" fill="#c8373a" stroke="none" stroke-width="0.55" />
<rect x="288.60" y="219.12" width="1.80" height="2.80" fill="#c8373a" stroke="none" stroke-width="0.55" />
<rect x="360.50" y="211.45" width="32.00" height="9.07" fill="none" stroke="#4472c4" stroke-width="1.10" />
<rect x="359.20" y="210.15" width="2.60" height="2.60" fill="#4472c4" stroke="none" stroke-width="0.55" />
<rect x="391.20" y="210.15" width="2.60" height="2.60" fill="#4472c4" stroke="none" stroke-width="0.55" />
<rect x="359.20" y="219.22" width="2.60" height="2.60" fill="#4472c4" stroke="none" stroke-width="0.55" />
<rect x="391.20" y="219.22" width="2.60" height="2.60" fill="#4472c4" stroke="none" stroke-width="0.55" />
<rect x="392.70" y="211.45" width="34.40" height="9.37" fill="#fff" stroke="#217346" stroke-width="1.10" />
<rect x="426.00" y="219.92" width="1.90" height="1.80" fill="#217346" stroke="#fff" stroke-width="0.30" />
<line x1="415.40" y1="212.65" x2="415.40" y2="219.52" stroke="#000" stroke-width="0.60" />
<rect x="1012.50" y="149.50" width="9.70" height="9.50" fill="#fff" stroke="#c0c0c0" stroke-width="0.50" />
<path d="M1014.9 155.3l2.45-2.5l2.45 2.5z" fill="#505050" stroke="none" stroke-width="0.55" />
<rect x="1012.50" y="159.60" width="9.70" height="18.20" fill="#fff" stroke="#c0c0c0" stroke-width="0.50" />
<rect x="1012.50" y="535.90" width="9.70" height="9.30" fill="#fff" stroke="#c0c0c0" stroke-width="0.50" />
<path d="M1014.9 539.6l2.45 2.5l2.45-2.5z" fill="#505050" stroke="none" stroke-width="0.55" />
<rect x="622.40" y="548.10" width="10.10" height="9.30" fill="#fff" stroke="#c0c0c0" stroke-width="0.50" />
<path d="M628.8 550.3l-2.5 2.45l2.5 2.45z" fill="#505050" stroke="none" stroke-width="0.55" />
<rect x="632.60" y="548.10" width="354.60" height="9.30" fill="#fff" stroke="#c0c0c0" stroke-width="0.50" />
<rect x="1000.40" y="548.10" width="9.90" height="9.30" fill="#fff" stroke="#c0c0c0" stroke-width="0.50" />
<path d="M1004.3 550.3l2.5 2.45l-2.5 2.45z" fill="#505050" stroke="none" stroke-width="0.55" />
<circle cx="613.50" cy="550.30" r="0.55" fill="#6a6866" stroke="none" stroke-width="0.55" />
<circle cx="613.50" cy="552.80" r="0.55" fill="#6a6866" stroke="none" stroke-width="0.55" />
<circle cx="613.50" cy="555.30" r="0.55" fill="#6a6866" stroke="none" stroke-width="0.55" />
<line x1="0.00" y1="560.20" x2="1024.00" y2="560.20" stroke="#c6c6c6" stroke-width="0.70" />
<path d="M17.6 550.4l-2.2 2.1l2.2 2.1z" fill="#c2c2c2" stroke="none" stroke-width="0.55" />
<path d="M30.6 550.4l2.2 2.1l-2.2 2.1z" fill="#c2c2c2" stroke="none" stroke-width="0.55" />
<line x1="55.50" y1="547.00" x2="55.50" y2="558.00" stroke="#b4b4b4" stroke-width="0.70" />
<line x1="88.30" y1="547.00" x2="88.30" y2="558.00" stroke="#b4b4b4" stroke-width="0.70" />
<line x1="122.70" y1="547.00" x2="122.70" y2="558.00" stroke="#b4b4b4" stroke-width="0.70" />
<circle cx="246.90" cy="552.90" r="5.10" fill="none" stroke="#8a8886" stroke-width="0.60" />
<path d="M244.2 552.9h5.4m-2.7-2.7v5.4" fill="none" stroke="#767676" stroke-width="0.90" />
<rect x="855.20" y="563.70" width="8.70" height="8.40" fill="none" stroke="#767676" stroke-width="0.75" />
<line x1="858.07" y1="563.70" x2="858.07" y2="572.10" stroke="#767676" stroke-width="0.50" />
<line x1="860.94" y1="563.70" x2="860.94" y2="572.10" stroke="#767676" stroke-width="0.50" />
<line x1="855.20" y1="566.47" x2="863.90" y2="566.47" stroke="#767676" stroke-width="0.50" />
<line x1="855.20" y1="569.24" x2="863.90" y2="569.24" stroke="#767676" stroke-width="0.50" />
<rect x="877.10" y="563.70" width="9.70" height="8.40" fill="none" stroke="#767676" stroke-width="0.60" />
<rect x="879.60" y="565.40" width="4.70" height="5.00" fill="none" stroke="#767676" stroke-width="0.50" />
<rect x="899.60" y="563.70" width="9.00" height="8.40" fill="none" stroke="#767676" stroke-width="0.60" />
<path d="M899.6 568.8h9M902.6 563.7v5.1M905.6 563.7v5.1" fill="none" stroke="#767676" stroke-width="0.50" />
<line x1="918.60" y1="567.80" x2="923.60" y2="567.80" stroke="#444" stroke-width="0.90" />
<line x1="926.00" y1="567.90" x2="992.20" y2="567.90" stroke="#a8a8a8" stroke-width="0.55" />
<line x1="959.50" y1="566.30" x2="959.50" y2="569.50" stroke="#a8a8a8" stroke-width="0.55" />
<path d="M994.8 567.8h5m-2.5-2.5v5" fill="none" stroke="#444" stroke-width="0.90" />
</svg>
<span class="t" style="left:14.51px;top:7px;line-height:9px;font-size:7.90px;color:#ffffff;letter-spacing:-0.126px;">AutoSave</span>
<span class="t" style="left:64.40px;top:8px;line-height:7px;font-size:6.60px;color:#ffffff;letter-spacing:0.039px;">Off</span>
<span class="t" style="left:461.66px;top:6px;line-height:9px;font-size:7.90px;color:#ffffff;letter-spacing:-0.131px;">Lab6Start v5 (1).xlsx  -  Excel</span>
<span class="t" style="left:834.76px;top:6px;line-height:9px;font-size:7.90px;color:#ffffff;letter-spacing:-0.159px;">Radja Fikri</span>
<span class="t" style="left:882.67px;top:8px;line-height:6px;font-size:5.60px;color:#e8eaf6;">RF</span>
<span class="t" style="left:11.33px;top:28px;line-height:10px;font-size:8.90px;color:#444444;letter-spacing:-0.485px;">File</span>
<span class="t" style="left:43.73px;top:28px;line-height:10px;font-size:8.90px;color:#333;letter-spacing:0.018px;font-weight:bold;">Home</span>
<span class="t" style="left:83.33px;top:28px;line-height:10px;font-size:8.90px;color:#444444;letter-spacing:0.024px;">Insert</span>
<span class="t" style="left:121.03px;top:28px;line-height:10px;font-size:8.90px;color:#444444;letter-spacing:-0.098px;">Page Layout</span>
<span class="t" style="left:185.53px;top:28px;line-height:10px;font-size:8.90px;color:#444444;letter-spacing:-0.111px;">Formulas</span>
<span class="t" style="left:237.33px;top:28px;line-height:10px;font-size:8.90px;color:#444444;letter-spacing:-0.100px;">Data</span>
<span class="t" style="left:271.43px;top:28px;line-height:10px;font-size:8.90px;color:#444444;letter-spacing:-0.297px;">Review</span>
<span class="t" style="left:314.83px;top:28px;line-height:10px;font-size:8.90px;color:#444444;letter-spacing:-0.032px;">View</span>
<span class="t" style="left:348.63px;top:28px;line-height:10px;font-size:8.90px;color:#444444;letter-spacing:-0.051px;">Help</span>
<span class="t" style="left:399.43px;top:28px;line-height:10px;font-size:8.90px;color:#444444;letter-spacing:-0.283px;">Search</span>
<span class="t" style="left:914.54px;top:28px;line-height:10px;font-size:8.70px;color:#217346;letter-spacing:-0.356px;font-weight:bold;">Share</span>
<span class="t" style="left:965.24px;top:28px;line-height:10px;font-size:8.70px;color:#217346;letter-spacing:-0.095px;font-weight:bold;">Comments</span>
<span class="t" style="left:9.86px;top:70px;line-height:9px;font-size:7.90px;color:#a6a6a6;letter-spacing:-0.560px;">Paste</span>
<span class="t" style="left:46.36px;top:50px;line-height:9px;font-size:7.90px;color:#3b3a39;letter-spacing:-0.398px;">Cut</span>
<span class="t" style="left:46.36px;top:65px;line-height:9px;font-size:7.90px;color:#3b3a39;letter-spacing:-0.161px;">Copy</span>
<span class="t" style="left:46.36px;top:81px;line-height:9px;font-size:7.90px;color:#a6a6a6;letter-spacing:-0.118px;">Format Painter</span>
<span class="t" style="left:32.58px;top:96px;line-height:9px;font-size:7.40px;color:#444444;letter-spacing:-0.153px;">Clipboard</span>
<span class="t" style="left:183.86px;top:55px;line-height:9px;font-size:7.90px;color:#a6a6a6;letter-spacing:-0.400px;">11</span>
<span class="t" style="left:217.92px;top:52px;line-height:11px;font-size:9.40px;color:#a6a6a6;">A</span>
<span class="t" style="left:232.64px;top:53px;line-height:10px;font-size:8.80px;color:#a6a6a6;">A</span>
<span class="t" style="left:117.24px;top:75px;line-height:10px;font-size:8.60px;color:#a6a6a6;font-weight:bold;">B</span>
<span class="t" style="left:133.04px;top:75px;line-height:10px;font-size:8.60px;color:#a6a6a6;font-style:italic;font-family:'Liberation Serif',serif;">I</span>
<span class="t" style="left:146.35px;top:74px;line-height:10px;font-size:8.40px;color:#a6a6a6;">U</span>
<span class="t" style="left:225.22px;top:73px;line-height:10px;font-size:9.30px;color:#a6a6a6;">A</span>
<span class="t" style="left:165.68px;top:96px;line-height:9px;font-size:7.40px;color:#444444;letter-spacing:-0.427px;">Font</span>
<span class="t" style="left:352.56px;top:55px;line-height:9px;font-size:7.90px;color:#a6a6a6;letter-spacing:0.070px;">Wrap Text</span>
<span class="t" style="left:352.96px;top:76px;line-height:9px;font-size:7.90px;color:#a6a6a6;letter-spacing:0.031px;">Merge &amp; Center</span>
<span class="t" style="left:316.58px;top:96px;line-height:9px;font-size:7.40px;color:#444444;letter-spacing:-0.245px;">Alignment</span>
<span class="t" style="left:433.86px;top:55px;line-height:9px;font-size:7.90px;color:#a6a6a6;letter-spacing:-0.286px;">General</span>
<span class="t" style="left:436.06px;top:74px;line-height:12px;font-size:11.30px;color:#a6a6a6;">$</span>
<span class="t" style="left:456.86px;top:75px;line-height:12px;font-size:11.40px;color:#a6a6a6;">%</span>
<span class="t" style="left:457.08px;top:96px;line-height:9px;font-size:7.40px;color:#444444;letter-spacing:-0.287px;">Number</span>
<span class="t" style="left:532.56px;top:70px;line-height:9px;font-size:7.90px;color:#a6a6a6;letter-spacing:0.107px;">Conditional</span>
<span class="t" style="left:531.36px;top:81px;line-height:9px;font-size:7.90px;color:#a6a6a6;letter-spacing:0.064px;">Formatting</span>
<span class="t" style="left:578.36px;top:70px;line-height:9px;font-size:7.90px;color:#a6a6a6;letter-spacing:-0.162px;">Format as</span>
<span class="t" style="left:583.56px;top:81px;line-height:9px;font-size:7.90px;color:#a6a6a6;letter-spacing:-0.157px;">Table</span>
<span class="t" style="left:621.76px;top:70px;line-height:9px;font-size:7.90px;color:#a6a6a6;letter-spacing:-0.152px;">Cell</span>
<span class="t" style="left:615.86px;top:81px;line-height:9px;font-size:7.90px;color:#a6a6a6;letter-spacing:-0.335px;">Styles</span>
<span class="t" style="left:577.08px;top:96px;line-height:9px;font-size:7.40px;color:#444444;letter-spacing:-0.509px;">Styles</span>
<span class="t" style="left:657.06px;top:70px;line-height:9px;font-size:7.90px;color:#a6a6a6;letter-spacing:-0.176px;">Insert</span>
<span class="t" style="left:681.76px;top:70px;line-height:9px;font-size:7.90px;color:#a6a6a6;letter-spacing:-0.023px;">Delete</span>
<span class="t" style="left:707.86px;top:70px;line-height:9px;font-size:7.90px;color:#a6a6a6;letter-spacing:-0.070px;">Format</span>
<span class="t" style="left:686.78px;top:96px;line-height:9px;font-size:7.40px;color:#444444;letter-spacing:-0.570px;">Cells</span>
<span class="t" style="left:759.56px;top:48px;line-height:9px;font-size:7.90px;color:#3b3a39;letter-spacing:-0.056px;">AutoSum</span>
<span class="t" style="left:759.86px;top:62px;line-height:9px;font-size:7.90px;color:#a6a6a6;letter-spacing:-0.298px;">Fill</span>
<span class="t" style="left:759.56px;top:76px;line-height:9px;font-size:7.90px;color:#3b3a39;letter-spacing:-0.296px;">Clear</span>
<span class="t" style="left:807.98px;top:47px;line-height:12px;font-size:10.80px;color:#a6a6a6;transform:scaleX(0.86);transform-origin:0 0;">A</span>
<span class="t" style="left:808.28px;top:56px;line-height:12px;font-size:10.80px;color:#a6a6a6;transform:scaleX(0.86);transform-origin:0 0;">Z</span>
<span class="t" style="left:805.46px;top:70px;line-height:9px;font-size:7.90px;color:#a6a6a6;letter-spacing:0.058px;">Sort &amp;</span>
<span class="t" style="left:805.46px;top:81px;line-height:9px;font-size:7.90px;color:#a6a6a6;letter-spacing:-0.043px;">Filter</span>
<span class="t" style="left:832.86px;top:70px;line-height:9px;font-size:7.90px;color:#3b3a39;letter-spacing:0.045px;">Find &amp;</span>
<span class="t" style="left:831.76px;top:81px;line-height:9px;font-size:7.90px;color:#3b3a39;letter-spacing:-0.159px;">Select</span>
<span class="t" style="left:791.78px;top:96px;line-height:9px;font-size:7.40px;color:#444444;letter-spacing:-0.275px;">Editing</span>
<span class="t" style="left:874.26px;top:70px;line-height:9px;font-size:7.90px;color:#a6a6a6;letter-spacing:-0.205px;">Ideas</span>
<span class="t" style="left:875.08px;top:96px;line-height:9px;font-size:7.40px;color:#444444;letter-spacing:-0.381px;">Ideas</span>
<span class="t" style="left:6.65px;top:117px;line-height:9px;font-size:8.20px;color:#444444;letter-spacing:-0.319px;">G7</span>
<span class="t" style="left:146.09px;top:115px;line-height:11px;font-size:10.20px;color:#505050;font-style:italic;font-family:'Liberation Serif',serif;letter-spacing:-0.3px;">fx</span>
<span class="t" style="left:172.55px;top:117px;line-height:9px;font-size:8.20px;color:#444444;letter-spacing:0.039px;">=J7/G7</span>
<span class="t" style="left:26.83px;top:149px;line-height:7px;font-size:6.50px;color:#3a3a3a;-webkit-text-stroke:0.08px;">A</span>
<span class="t" style="left:71.33px;top:149px;line-height:7px;font-size:6.50px;color:#3a3a3a;-webkit-text-stroke:0.08px;">B</span>
<span class="t" style="left:128.65px;top:149px;line-height:7px;font-size:6.50px;color:#3a3a3a;-webkit-text-stroke:0.08px;">C</span>
<span class="t" style="left:171.65px;top:149px;line-height:7px;font-size:6.50px;color:#3a3a3a;-webkit-text-stroke:0.08px;">D</span>
<span class="t" style="left:203.08px;top:149px;line-height:7px;font-size:6.50px;color:#3a3a3a;-webkit-text-stroke:0.08px;">E</span>
<span class="t" style="left:236.76px;top:149px;line-height:7px;font-size:6.50px;color:#3a3a3a;-webkit-text-stroke:0.08px;">F</span>
<span class="t" style="left:269.97px;top:149px;line-height:7px;font-size:6.50px;color:#3a3a3a;-webkit-text-stroke:0.08px;">G</span>
<span class="t" style="left:303.90px;top:149px;line-height:7px;font-size:6.50px;color:#3a3a3a;-webkit-text-stroke:0.08px;">H</span>
<span class="t" style="left:340.85px;top:149px;line-height:7px;font-size:6.50px;color:#3a3a3a;-webkit-text-stroke:0.08px;">I</span>
<span class="t" style="left:374.88px;top:149px;line-height:7px;font-size:6.50px;color:#3a3a3a;-webkit-text-stroke:0.08px;">J</span>
<span class="t" style="left:407.33px;top:149px;line-height:7px;font-size:6.50px;color:#1e6b41;-webkit-text-stroke:0.08px;">K</span>
<span class="t" style="left:439.69px;top:149px;line-height:7px;font-size:6.50px;color:#3a3a3a;-webkit-text-stroke:0.08px;">L</span>
<span class="t" style="left:468.29px;top:149px;line-height:7px;font-size:6.50px;color:#3a3a3a;-webkit-text-stroke:0.08px;">M</span>
<span class="t" style="left:500.65px;top:149px;line-height:7px;font-size:6.50px;color:#3a3a3a;-webkit-text-stroke:0.08px;">N</span>
<span class="t" style="left:534.47px;top:149px;line-height:7px;font-size:6.50px;color:#3a3a3a;-webkit-text-stroke:0.08px;">O</span>
<span class="t" style="left:566.33px;top:149px;line-height:7px;font-size:6.50px;color:#3a3a3a;-webkit-text-stroke:0.08px;">P</span>
<span class="t" style="left:597.97px;top:149px;line-height:7px;font-size:6.50px;color:#3a3a3a;-webkit-text-stroke:0.08px;">Q</span>
<span class="t" style="left:630.15px;top:149px;line-height:7px;font-size:6.50px;color:#3a3a3a;-webkit-text-stroke:0.08px;">R</span>
<span class="t" style="left:659.83px;top:149px;line-height:7px;font-size:6.50px;color:#3a3a3a;-webkit-text-stroke:0.08px;">S</span>
<span class="t" style="left:692.01px;top:149px;line-height:7px;font-size:6.50px;color:#3a3a3a;-webkit-text-stroke:0.08px;">T</span>
<span class="t" style="left:728.15px;top:149px;line-height:7px;font-size:6.50px;color:#3a3a3a;-webkit-text-stroke:0.08px;">U</span>
<span class="t" style="left:762.33px;top:149px;line-height:7px;font-size:6.50px;color:#3a3a3a;-webkit-text-stroke:0.08px;">V</span>
<span class="t" style="left:791.93px;top:149px;line-height:7px;font-size:6.50px;color:#3a3a3a;-webkit-text-stroke:0.08px;">W</span>
<span class="t" style="left:823.83px;top:149px;line-height:7px;font-size:6.50px;color:#3a3a3a;-webkit-text-stroke:0.08px;">X</span>
<span class="t" style="left:854.83px;top:149px;line-height:7px;font-size:6.50px;color:#3a3a3a;-webkit-text-stroke:0.08px;">Y</span>
<span class="t" style="left:886.01px;top:149px;line-height:7px;font-size:6.50px;color:#3a3a3a;-webkit-text-stroke:0.08px;">Z</span>
<span class="t" style="left:914.66px;top:149px;line-height:7px;font-size:6.50px;color:#3a3a3a;-webkit-text-stroke:0.08px;">AA</span>
<span class="t" style="left:945.66px;top:149px;line-height:7px;font-size:6.50px;color:#3a3a3a;-webkit-text-stroke:0.08px;">AB</span>
<span class="t" style="left:976.49px;top:149px;line-height:7px;font-size:6.50px;color:#3a3a3a;-webkit-text-stroke:0.08px;">AC</span>
<span class="t" style="left:1008.20px;top:149px;line-height:7px;font-size:6.50px;color:#444444;clip-path:inset(0 2.2px 0 0);">A</span>
<span class="t" style="left:5.22px;top:158px;line-height:7px;font-size:6.50px;color:#3a3a3a;letter-spacing:-0.250px;-webkit-text-stroke:0.06px;">1</span>
<span class="t" style="left:5.22px;top:167px;line-height:7px;font-size:6.50px;color:#3a3a3a;letter-spacing:-0.250px;-webkit-text-stroke:0.06px;">2</span>
<span class="t" style="left:5.22px;top:176px;line-height:7px;font-size:6.50px;color:#3a3a3a;letter-spacing:-0.250px;-webkit-text-stroke:0.06px;">3</span>
<span class="t" style="left:5.22px;top:186px;line-height:7px;font-size:6.50px;color:#3a3a3a;letter-spacing:-0.250px;-webkit-text-stroke:0.06px;">4</span>
<span class="t" style="left:5.22px;top:195px;line-height:7px;font-size:6.50px;color:#3a3a3a;letter-spacing:-0.250px;-webkit-text-stroke:0.06px;">5</span>
<span class="t" style="left:5.22px;top:204px;line-height:7px;font-size:6.50px;color:#3a3a3a;letter-spacing:-0.250px;-webkit-text-stroke:0.06px;">6</span>
<span class="t" style="left:5.22px;top:213px;line-height:7px;font-size:6.50px;color:#1e6b41;letter-spacing:-0.250px;-webkit-text-stroke:0.06px;">7</span>
<span class="t" style="left:5.22px;top:222px;line-height:7px;font-size:6.50px;color:#3a3a3a;letter-spacing:-0.250px;-webkit-text-stroke:0.06px;">8</span>
<span class="t" style="left:5.22px;top:231px;line-height:7px;font-size:6.50px;color:#3a3a3a;letter-spacing:-0.250px;-webkit-text-stroke:0.06px;">9</span>
<span class="t" style="left:3.53px;top:240px;line-height:7px;font-size:6.50px;color:#3a3a3a;letter-spacing:-0.250px;-webkit-text-stroke:0.06px;">10</span>
<span class="t" style="left:3.78px;top:249px;line-height:7px;font-size:6.50px;color:#3a3a3a;letter-spacing:-0.250px;-webkit-text-stroke:0.06px;">11</span>
<span class="t" style="left:3.53px;top:258px;line-height:7px;font-size:6.50px;color:#3a3a3a;letter-spacing:-0.250px;-webkit-text-stroke:0.06px;">12</span>
<span class="t" style="left:3.53px;top:267px;line-height:7px;font-size:6.50px;color:#3a3a3a;letter-spacing:-0.250px;-webkit-text-stroke:0.06px;">13</span>
<span class="t" style="left:3.53px;top:276px;line-height:7px;font-size:6.50px;color:#3a3a3a;letter-spacing:-0.250px;-webkit-text-stroke:0.06px;">14</span>
<span class="t" style="left:3.53px;top:285px;line-height:7px;font-size:6.50px;color:#3a3a3a;letter-spacing:-0.250px;-webkit-text-stroke:0.06px;">15</span>
<span class="t" style="left:3.53px;top:294px;line-height:7px;font-size:6.50px;color:#3a3a3a;letter-spacing:-0.250px;-webkit-text-stroke:0.06px;">16</span>
<span class="t" style="left:3.53px;top:303px;line-height:7px;font-size:6.50px;color:#3a3a3a;letter-spacing:-0.250px;-webkit-text-stroke:0.06px;">17</span>
<span class="t" style="left:3.53px;top:312px;line-height:7px;font-size:6.50px;color:#3a3a3a;letter-spacing:-0.250px;-webkit-text-stroke:0.06px;">18</span>
<span class="t" style="left:3.53px;top:322px;line-height:7px;font-size:6.50px;color:#3a3a3a;letter-spacing:-0.250px;-webkit-text-stroke:0.06px;">19</span>
<span class="t" style="left:3.53px;top:331px;line-height:7px;font-size:6.50px;color:#3a3a3a;letter-spacing:-0.250px;-webkit-text-stroke:0.06px;">20</span>
<span class="t" style="left:3.53px;top:340px;line-height:7px;font-size:6.50px;color:#3a3a3a;letter-spacing:-0.250px;-webkit-text-stroke:0.06px;">21</span>
<span class="t" style="left:3.53px;top:349px;line-height:7px;font-size:6.50px;color:#3a3a3a;letter-spacing:-0.250px;-webkit-text-stroke:0.06px;">22</span>
<span class="t" style="left:3.53px;top:358px;line-height:7px;font-size:6.50px;color:#3a3a3a;letter-spacing:-0.250px;-webkit-text-stroke:0.06px;">23</span>
<span class="t" style="left:3.53px;top:367px;line-height:7px;font-size:6.50px;color:#3a3a3a;letter-spacing:-0.250px;-webkit-text-stroke:0.06px;">24</span>
<span class="t" style="left:3.53px;top:376px;line-height:7px;font-size:6.50px;color:#3a3a3a;letter-spacing:-0.250px;-webkit-text-stroke:0.06px;">25</span>
<span class="t" style="left:3.53px;top:385px;line-height:7px;font-size:6.50px;color:#3a3a3a;letter-spacing:-0.250px;-webkit-text-stroke:0.06px;">26</span>
<span class="t" style="left:3.53px;top:394px;line-height:7px;font-size:6.50px;color:#3a3a3a;letter-spacing:-0.250px;-webkit-text-stroke:0.06px;">27</span>
<span class="t" style="left:3.53px;top:403px;line-height:7px;font-size:6.50px;color:#3a3a3a;letter-spacing:-0.250px;-webkit-text-stroke:0.06px;">28</span>
<span class="t" style="left:3.53px;top:412px;line-height:7px;font-size:6.50px;color:#3a3a3a;letter-spacing:-0.250px;-webkit-text-stroke:0.06px;">29</span>
<span class="t" style="left:3.53px;top:421px;line-height:7px;font-size:6.50px;color:#3a3a3a;letter-spacing:-0.250px;-webkit-text-stroke:0.06px;">30</span>
<span class="t" style="left:3.53px;top:430px;line-height:7px;font-size:6.50px;color:#3a3a3a;letter-spacing:-0.250px;-webkit-text-stroke:0.06px;">31</span>
<span class="t" style="left:3.53px;top:439px;line-height:7px;font-size:6.50px;color:#3a3a3a;letter-spacing:-0.250px;-webkit-text-stroke:0.06px;">32</span>
<span class="t" style="left:3.53px;top:448px;line-height:7px;font-size:6.50px;color:#3a3a3a;letter-spacing:-0.250px;-webkit-text-stroke:0.06px;">33</span>
<span class="t" style="left:3.53px;top:458px;line-height:7px;font-size:6.50px;color:#3a3a3a;letter-spacing:-0.250px;-webkit-text-stroke:0.06px;">34</span>
<span class="t" style="left:3.53px;top:467px;line-height:7px;font-size:6.50px;color:#3a3a3a;letter-spacing:-0.250px;-webkit-text-stroke:0.06px;">35</span>
<span class="t" style="left:3.53px;top:476px;line-height:7px;font-size:6.50px;color:#3a3a3a;letter-spacing:-0.250px;-webkit-text-stroke:0.06px;">36</span>
<span class="t" style="left:3.53px;top:485px;line-height:7px;font-size:6.50px;color:#3a3a3a;letter-spacing:-0.250px;-webkit-text-stroke:0.06px;">37</span>
<span class="t" style="left:3.53px;top:494px;line-height:7px;font-size:6.50px;color:#3a3a3a;letter-spacing:-0.250px;-webkit-text-stroke:0.06px;">38</span>
<span class="t" style="left:3.53px;top:503px;line-height:7px;font-size:6.50px;color:#3a3a3a;letter-spacing:-0.250px;-webkit-text-stroke:0.06px;">39</span>
<span class="t" style="left:3.53px;top:512px;line-height:7px;font-size:6.50px;color:#3a3a3a;letter-spacing:-0.250px;-webkit-text-stroke:0.06px;">40</span>
<span class="t" style="left:3.53px;top:521px;line-height:7px;font-size:6.50px;color:#3a3a3a;letter-spacing:-0.250px;-webkit-text-stroke:0.06px;">41</span>
<span class="t" style="left:3.53px;top:530px;line-height:7px;font-size:6.50px;color:#3a3a3a;letter-spacing:-0.250px;-webkit-text-stroke:0.06px;">42</span>
<span class="t" style="left:3.53px;top:539px;line-height:7px;font-size:6.50px;color:#3a3a3a;letter-spacing:-0.250px;-webkit-text-stroke:0.06px;">43</span>
<span class="t" style="left:45.80px;top:195px;line-height:7px;font-size:6.55px;color:#1a1a1a;letter-spacing:-0.301px;font-weight:bold;">Sum of Revenue</span>
<span class="t" style="left:103.80px;top:195px;line-height:7px;font-size:6.55px;color:#1a1a1a;letter-spacing:-0.381px;font-weight:bold;">Column Labels</span>
<span class="t" style="left:45.80px;top:204px;line-height:7px;font-size:6.55px;color:#1a1a1a;letter-spacing:-0.430px;font-weight:bold;">Row Labels</span>
<span class="t" style="left:143.89px;top:204px;line-height:7px;font-size:6.55px;color:#1a1a1a;letter-spacing:-0.050px;font-weight:bold;">2011</span>
<span class="t" style="left:172.53px;top:204px;line-height:7px;font-size:6.55px;color:#1a1a1a;letter-spacing:-0.050px;font-weight:bold;">2012</span>
<span class="t" style="left:206.03px;top:204px;line-height:7px;font-size:6.55px;color:#1a1a1a;letter-spacing:-0.050px;font-weight:bold;">2013</span>
<span class="t" style="left:239.53px;top:204px;line-height:7px;font-size:6.55px;color:#1a1a1a;letter-spacing:-0.050px;font-weight:bold;">2014</span>
<span class="t" style="left:273.53px;top:204px;line-height:7px;font-size:6.55px;color:#1a1a1a;letter-spacing:-0.050px;font-weight:bold;">2015</span>
<span class="t" style="left:307.03px;top:204px;line-height:7px;font-size:6.55px;color:#1a1a1a;letter-spacing:-0.050px;font-weight:bold;">2016</span>
<span class="t" style="left:323.95px;top:204px;line-height:7px;font-size:6.55px;color:#1a1a1a;letter-spacing:-0.120px;font-weight:bold;">Grand Total</span>
<span class="t" style="left:361.60px;top:204px;line-height:7px;font-size:6.55px;color:#1a1a1a;">Growth</span>
<span class="t" style="left:393.60px;top:204px;line-height:7px;font-size:6.55px;color:#1a1a1a;">Growth %</span>
<span class="t" style="left:52.80px;top:213px;line-height:7px;font-size:6.55px;color:#1a1a1a;letter-spacing:-0.348px;font-weight:bold;">Australia</span>
<span class="t" style="left:132.75px;top:213px;line-height:7px;font-size:6.55px;color:#1a1a1a;letter-spacing:-0.050px;font-weight:bold;">2529914</span>
<span class="t" style="left:162.11px;top:213px;line-height:7px;font-size:6.55px;color:#1a1a1a;letter-spacing:-0.050px;font-weight:bold;">2557511</span>
<span class="t" style="left:195.25px;top:213px;line-height:7px;font-size:6.55px;color:#1a1a1a;letter-spacing:-0.050px;font-weight:bold;">4107470</span>
<span class="t" style="left:228.75px;top:213px;line-height:7px;font-size:6.55px;color:#1a1a1a;letter-spacing:-0.050px;font-weight:bold;">2802842</span>
<span class="t" style="left:262.75px;top:213px;line-height:7px;font-size:6.55px;color:#1a1a1a;letter-spacing:-0.050px;font-weight:bold;">5712339</span>
<span class="t" style="left:296.25px;top:213px;line-height:7px;font-size:6.55px;color:#1a1a1a;letter-spacing:-0.050px;font-weight:bold;">3591983</span>
<span class="t" style="left:330.16px;top:213px;line-height:7px;font-size:6.55px;color:#1a1a1a;letter-spacing:-0.050px;font-weight:bold;">21302059</span>
<span class="t" style="left:363.62px;top:213px;line-height:7px;font-size:6.55px;color:#1a1a1a;letter-spacing:-0.050px;">-2120356</span>
<span class="t" style="left:59.70px;top:222px;line-height:7px;font-size:6.55px;color:#1a1a1a;letter-spacing:-0.110px;">Accessories</span>
<span class="t" style="left:199.33px;top:222px;line-height:7px;font-size:6.55px;color:#1a1a1a;letter-spacing:-0.050px;">624112</span>
<span class="t" style="left:232.34px;top:222px;line-height:7px;font-size:6.55px;color:#1a1a1a;letter-spacing:-0.050px;">769797</span>
<span class="t" style="left:266.34px;top:222px;line-height:7px;font-size:6.55px;color:#1a1a1a;letter-spacing:-0.050px;">607396</span>
<span class="t" style="left:299.84px;top:222px;line-height:7px;font-size:6.55px;color:#1a1a1a;letter-spacing:-0.050px;">745100</span>
<span class="t" style="left:333.75px;top:222px;line-height:7px;font-size:6.55px;color:#1a1a1a;letter-spacing:-0.050px;">2746405</span>
<span class="t" style="left:369.34px;top:222px;line-height:7px;font-size:6.55px;color:#1a1a1a;letter-spacing:-0.050px;">137704</span>
<span class="t" style="left:59.70px;top:231px;line-height:7px;font-size:6.55px;color:#1a1a1a;letter-spacing:-0.203px;">Bikes</span>
<span class="t" style="left:132.75px;top:231px;line-height:7px;font-size:6.55px;color:#1a1a1a;letter-spacing:-0.050px;">2529914</span>
<span class="t" style="left:162.24px;top:231px;line-height:7px;font-size:6.55px;color:#1a1a1a;letter-spacing:-0.050px;">2557511</span>
<span class="t" style="left:195.25px;top:231px;line-height:7px;font-size:6.55px;color:#1a1a1a;letter-spacing:-0.050px;">3050202</span>
<span class="t" style="left:228.75px;top:231px;line-height:7px;font-size:6.55px;color:#1a1a1a;letter-spacing:-0.050px;">1655516</span>
<span class="t" style="left:262.75px;top:231px;line-height:7px;font-size:6.55px;color:#1a1a1a;letter-spacing:-0.050px;">4677632</span>
<span class="t" style="left:296.25px;top:231px;line-height:7px;font-size:6.55px;color:#1a1a1a;letter-spacing:-0.050px;">2482043</span>
<span class="t" style="left:330.16px;top:231px;line-height:7px;font-size:6.55px;color:#1a1a1a;letter-spacing:-0.050px;">16952818</span>
<span class="t" style="left:363.62px;top:231px;line-height:7px;font-size:6.55px;color:#1a1a1a;letter-spacing:-0.050px;">-2195589</span>
<span class="t" style="left:59.70px;top:240px;line-height:7px;font-size:6.55px;color:#1a1a1a;letter-spacing:-0.016px;">Clothing</span>
<span class="t" style="left:198.84px;top:240px;line-height:7px;font-size:6.55px;color:#1a1a1a;letter-spacing:-0.050px;">433156</span>
<span class="t" style="left:232.34px;top:240px;line-height:7px;font-size:6.55px;color:#1a1a1a;letter-spacing:-0.050px;">377529</span>
<span class="t" style="left:266.83px;top:240px;line-height:7px;font-size:6.55px;color:#1a1a1a;letter-spacing:-0.050px;">427311</span>
<span class="t" style="left:299.84px;top:240px;line-height:7px;font-size:6.55px;color:#1a1a1a;letter-spacing:-0.050px;">364840</span>
<span class="t" style="left:333.75px;top:240px;line-height:7px;font-size:6.55px;color:#1a1a1a;letter-spacing:-0.050px;">1602836</span>
<span class="t" style="left:370.80px;top:240px;line-height:7px;font-size:6.55px;color:#1a1a1a;letter-spacing:-0.050px;">-62471</span>
<span class="t" style="left:52.80px;top:249px;line-height:7px;font-size:6.55px;color:#1a1a1a;letter-spacing:-0.560px;font-weight:bold;">Canada</span>
<span class="t" style="left:136.34px;top:249px;line-height:7px;font-size:6.55px;color:#1a1a1a;letter-spacing:-0.050px;font-weight:bold;">789798</span>
<span class="t" style="left:165.34px;top:249px;line-height:7px;font-size:6.55px;color:#1a1a1a;letter-spacing:-0.050px;font-weight:bold;">835527</span>
<span class="t" style="left:195.25px;top:249px;line-height:7px;font-size:6.55px;color:#1a1a1a;letter-spacing:-0.050px;font-weight:bold;">1443537</span>
<span class="t" style="left:228.75px;top:249px;line-height:7px;font-size:6.55px;color:#1a1a1a;letter-spacing:-0.050px;font-weight:bold;">1471522</span>
<span class="t" style="left:262.75px;top:249px;line-height:7px;font-size:6.55px;color:#1a1a1a;letter-spacing:-0.050px;font-weight:bold;">1731954</span>
<span class="t" style="left:296.25px;top:249px;line-height:7px;font-size:6.55px;color:#1a1a1a;letter-spacing:-0.050px;font-weight:bold;">1663400</span>
<span class="t" style="left:333.75px;top:249px;line-height:7px;font-size:6.55px;color:#1a1a1a;letter-spacing:-0.050px;font-weight:bold;">7935738</span>
<span class="t" style="left:370.80px;top:249px;line-height:7px;font-size:6.55px;color:#1a1a1a;letter-spacing:-0.050px;">-68554</span>
<span class="t" style="left:59.70px;top:258px;line-height:7px;font-size:6.55px;color:#1a1a1a;letter-spacing:-0.110px;">Accessories</span>
<span class="t" style="left:198.84px;top:258px;line-height:7px;font-size:6.55px;color:#1a1a1a;letter-spacing:-0.050px;">529972</span>
<span class="t" style="left:232.34px;top:258px;line-height:7px;font-size:6.55px;color:#1a1a1a;letter-spacing:-0.050px;">626195</span>
<span class="t" style="left:266.83px;top:258px;line-height:7px;font-size:6.55px;color:#1a1a1a;letter-spacing:-0.050px;">517711</span>
<span class="t" style="left:299.84px;top:258px;line-height:7px;font-size:6.55px;color:#1a1a1a;letter-spacing:-0.050px;">609062</span>
<span class="t" style="left:333.75px;top:258px;line-height:7px;font-size:6.55px;color:#1a1a1a;letter-spacing:-0.050px;">2282940</span>
<span class="t" style="left:372.94px;top:258px;line-height:7px;font-size:6.55px;color:#1a1a1a;letter-spacing:-0.050px;">91351</span>
<span class="t" style="left:59.70px;top:267px;line-height:7px;font-size:6.55px;color:#1a1a1a;letter-spacing:-0.203px;">Bikes</span>
<span class="t" style="left:136.34px;top:267px;line-height:7px;font-size:6.55px;color:#1a1a1a;letter-spacing:-0.050px;">789798</span>
<span class="t" style="left:165.34px;top:267px;line-height:7px;font-size:6.55px;color:#1a1a1a;letter-spacing:-0.050px;">835527</span>
<span class="t" style="left:198.84px;top:267px;line-height:7px;font-size:6.55px;color:#1a1a1a;letter-spacing:-0.050px;">589502</span>
<span class="t" style="left:232.83px;top:267px;line-height:7px;font-size:6.55px;color:#1a1a1a;letter-spacing:-0.050px;">471155</span>
<span class="t" style="left:266.34px;top:267px;line-height:7px;font-size:6.55px;color:#1a1a1a;letter-spacing:-0.050px;">901419</span>
<span class="t" style="left:299.84px;top:267px;line-height:7px;font-size:6.55px;color:#1a1a1a;letter-spacing:-0.050px;">687602</span>
<span class="t" style="left:333.75px;top:267px;line-height:7px;font-size:6.55px;color:#1a1a1a;letter-spacing:-0.050px;">4275003</span>
<span class="t" style="left:367.21px;top:267px;line-height:7px;font-size:6.55px;color:#1a1a1a;letter-spacing:-0.050px;">-213817</span>
<span class="t" style="left:59.70px;top:276px;line-height:7px;font-size:6.55px;color:#1a1a1a;letter-spacing:-0.016px;">Clothing</span>
<span class="t" style="left:198.84px;top:276px;line-height:7px;font-size:6.55px;color:#1a1a1a;letter-spacing:-0.050px;">324063</span>
<span class="t" style="left:232.34px;top:276px;line-height:7px;font-size:6.55px;color:#1a1a1a;letter-spacing:-0.050px;">374172</span>
<span class="t" style="left:266.34px;top:276px;line-height:7px;font-size:6.55px;color:#1a1a1a;letter-spacing:-0.050px;">312824</span>
<span class="t" style="left:299.84px;top:276px;line-height:7px;font-size:6.55px;color:#1a1a1a;letter-spacing:-0.050px;">366736</span>
<span class="t" style="left:333.75px;top:276px;line-height:7px;font-size:6.55px;color:#1a1a1a;letter-spacing:-0.050px;">1377795</span>
<span class="t" style="left:372.94px;top:276px;line-height:7px;font-size:6.55px;color:#1a1a1a;letter-spacing:-0.050px;">53912</span>
<span class="t" style="left:52.80px;top:285px;line-height:7px;font-size:6.55px;color:#1a1a1a;letter-spacing:-0.447px;font-weight:bold;">France</span>
<span class="t" style="left:136.34px;top:285px;line-height:7px;font-size:6.55px;color:#1a1a1a;letter-spacing:-0.050px;font-weight:bold;">946624</span>
<span class="t" style="left:165.34px;top:285px;line-height:7px;font-size:6.55px;color:#1a1a1a;letter-spacing:-0.050px;font-weight:bold;">962153</span>
<span class="t" style="left:195.25px;top:285px;line-height:7px;font-size:6.55px;color:#1a1a1a;letter-spacing:-0.050px;font-weight:bold;">1431870</span>
<span class="t" style="left:229.47px;top:285px;line-height:7px;font-size:6.55px;color:#1a1a1a;letter-spacing:-0.050px;font-weight:bold;">1411100</span>
<span class="t" style="left:262.75px;top:285px;line-height:7px;font-size:6.55px;color:#1a1a1a;letter-spacing:-0.050px;font-weight:bold;">1877928</span>
<span class="t" style="left:296.25px;top:285px;line-height:7px;font-size:6.55px;color:#1a1a1a;letter-spacing:-0.050px;font-weight:bold;">1803197</span>
<span class="t" style="left:333.75px;top:285px;line-height:7px;font-size:6.55px;color:#1a1a1a;letter-spacing:-0.050px;font-weight:bold;">8432872</span>
<span class="t" style="left:370.80px;top:285px;line-height:7px;font-size:6.55px;color:#1a1a1a;letter-spacing:-0.050px;">-74731</span>
<span class="t" style="left:59.70px;top:295px;line-height:7px;font-size:6.55px;color:#1a1a1a;letter-spacing:-0.110px;">Accessories</span>
<span class="t" style="left:198.84px;top:295px;line-height:7px;font-size:6.55px;color:#1a1a1a;letter-spacing:-0.050px;">303965</span>
<span class="t" style="left:232.34px;top:295px;line-height:7px;font-size:6.55px;color:#1a1a1a;letter-spacing:-0.050px;">402775</span>
<span class="t" style="left:266.34px;top:295px;line-height:7px;font-size:6.55px;color:#1a1a1a;letter-spacing:-0.050px;">293706</span>
<span class="t" style="left:299.84px;top:295px;line-height:7px;font-size:6.55px;color:#1a1a1a;letter-spacing:-0.050px;">387607</span>
<span class="t" style="left:333.75px;top:295px;line-height:7px;font-size:6.55px;color:#1a1a1a;letter-spacing:-0.050px;">1388053</span>
<span class="t" style="left:372.94px;top:295px;line-height:7px;font-size:6.55px;color:#1a1a1a;letter-spacing:-0.050px;">93901</span>
<span class="t" style="left:59.70px;top:304px;line-height:7px;font-size:6.55px;color:#1a1a1a;letter-spacing:-0.203px;">Bikes</span>
<span class="t" style="left:136.34px;top:304px;line-height:7px;font-size:6.55px;color:#1a1a1a;letter-spacing:-0.050px;">946624</span>
<span class="t" style="left:165.34px;top:304px;line-height:7px;font-size:6.55px;color:#1a1a1a;letter-spacing:-0.050px;">962153</span>
<span class="t" style="left:198.84px;top:304px;line-height:7px;font-size:6.55px;color:#1a1a1a;letter-spacing:-0.050px;">959578</span>
<span class="t" style="left:232.34px;top:304px;line-height:7px;font-size:6.55px;color:#1a1a1a;letter-spacing:-0.050px;">810165</span>
<span class="t" style="left:262.75px;top:304px;line-height:7px;font-size:6.55px;color:#1a1a1a;letter-spacing:-0.050px;">1422728</span>
<span class="t" style="left:296.25px;top:304px;line-height:7px;font-size:6.55px;color:#1a1a1a;letter-spacing:-0.050px;">1222877</span>
<span class="t" style="left:333.75px;top:304px;line-height:7px;font-size:6.55px;color:#1a1a1a;letter-spacing:-0.050px;">6324125</span>
<span class="t" style="left:367.21px;top:304px;line-height:7px;font-size:6.55px;color:#1a1a1a;letter-spacing:-0.050px;">-199851</span>
<span class="t" style="left:59.70px;top:313px;line-height:7px;font-size:6.55px;color:#1a1a1a;letter-spacing:-0.016px;">Clothing</span>
<span class="t" style="left:198.84px;top:313px;line-height:7px;font-size:6.55px;color:#1a1a1a;letter-spacing:-0.050px;">168327</span>
<span class="t" style="left:232.34px;top:313px;line-height:7px;font-size:6.55px;color:#1a1a1a;letter-spacing:-0.050px;">198160</span>
<span class="t" style="left:266.34px;top:313px;line-height:7px;font-size:6.55px;color:#1a1a1a;letter-spacing:-0.050px;">161494</span>
<span class="t" style="left:299.84px;top:313px;line-height:7px;font-size:6.55px;color:#1a1a1a;letter-spacing:-0.050px;">192713</span>
<span class="t" style="left:337.34px;top:313px;line-height:7px;font-size:6.55px;color:#1a1a1a;letter-spacing:-0.050px;">720694</span>
<span class="t" style="left:372.94px;top:313px;line-height:7px;font-size:6.55px;color:#1a1a1a;letter-spacing:-0.050px;">31219</span>
<span class="t" style="left:52.80px;top:322px;line-height:7px;font-size:6.55px;color:#1a1a1a;letter-spacing:-0.314px;font-weight:bold;">Germany</span>
<span class="t" style="left:136.34px;top:322px;line-height:7px;font-size:6.55px;color:#1a1a1a;letter-spacing:-0.050px;font-weight:bold;">833603</span>
<span class="t" style="left:165.34px;top:322px;line-height:7px;font-size:6.55px;color:#1a1a1a;letter-spacing:-0.050px;font-weight:bold;">835188</span>
<span class="t" style="left:195.25px;top:322px;line-height:7px;font-size:6.55px;color:#1a1a1a;letter-spacing:-0.050px;font-weight:bold;">1452704</span>
<span class="t" style="left:228.75px;top:322px;line-height:7px;font-size:6.55px;color:#1a1a1a;letter-spacing:-0.050px;font-weight:bold;">1702508</span>
<span class="t" style="left:262.75px;top:322px;line-height:7px;font-size:6.55px;color:#1a1a1a;letter-spacing:-0.050px;font-weight:bold;">1931091</span>
<span class="t" style="left:296.25px;top:322px;line-height:7px;font-size:6.55px;color:#1a1a1a;letter-spacing:-0.050px;font-weight:bold;">2223502</span>
<span class="t" style="left:333.75px;top:322px;line-height:7px;font-size:6.55px;color:#1a1a1a;letter-spacing:-0.050px;font-weight:bold;">8978596</span>
<span class="t" style="left:369.83px;top:322px;line-height:7px;font-size:6.55px;color:#1a1a1a;letter-spacing:-0.050px;">292411</span>
<span class="t" style="left:59.70px;top:331px;line-height:7px;font-size:6.55px;color:#1a1a1a;letter-spacing:-0.110px;">Accessories</span>
<span class="t" style="left:198.84px;top:331px;line-height:7px;font-size:6.55px;color:#1a1a1a;letter-spacing:-0.050px;">312863</span>
<span class="t" style="left:232.34px;top:331px;line-height:7px;font-size:6.55px;color:#1a1a1a;letter-spacing:-0.050px;">473131</span>
<span class="t" style="left:266.34px;top:331px;line-height:7px;font-size:6.55px;color:#1a1a1a;letter-spacing:-0.050px;">302927</span>
<span class="t" style="left:299.84px;top:331px;line-height:7px;font-size:6.55px;color:#1a1a1a;letter-spacing:-0.050px;">459897</span>
<span class="t" style="left:333.75px;top:331px;line-height:7px;font-size:6.55px;color:#1a1a1a;letter-spacing:-0.050px;">1548818</span>
<span class="t" style="left:369.34px;top:331px;line-height:7px;font-size:6.55px;color:#1a1a1a;letter-spacing:-0.050px;">156970</span>
<span class="t" style="left:59.70px;top:340px;line-height:7px;font-size:6.55px;color:#1a1a1a;letter-spacing:-0.203px;">Bikes</span>
<span class="t" style="left:136.34px;top:340px;line-height:7px;font-size:6.55px;color:#1a1a1a;letter-spacing:-0.050px;">833603</span>
<span class="t" style="left:165.34px;top:340px;line-height:7px;font-size:6.55px;color:#1a1a1a;letter-spacing:-0.050px;">835188</span>
<span class="t" style="left:195.25px;top:340px;line-height:7px;font-size:6.55px;color:#1a1a1a;letter-spacing:-0.050px;">1015098</span>
<span class="t" style="left:228.75px;top:340px;line-height:7px;font-size:6.55px;color:#1a1a1a;letter-spacing:-0.050px;">1030713</span>
<span class="t" style="left:262.75px;top:340px;line-height:7px;font-size:6.55px;color:#1a1a1a;letter-spacing:-0.050px;">1508441</span>
<span class="t" style="left:296.25px;top:340px;line-height:7px;font-size:6.55px;color:#1a1a1a;letter-spacing:-0.050px;">1569739</span>
<span class="t" style="left:333.75px;top:340px;line-height:7px;font-size:6.55px;color:#1a1a1a;letter-spacing:-0.050px;">6792782</span>
<span class="t" style="left:372.94px;top:340px;line-height:7px;font-size:6.55px;color:#1a1a1a;letter-spacing:-0.050px;">61298</span>
<span class="t" style="left:59.70px;top:349px;line-height:7px;font-size:6.55px;color:#1a1a1a;letter-spacing:-0.016px;">Clothing</span>
<span class="t" style="left:198.84px;top:349px;line-height:7px;font-size:6.55px;color:#1a1a1a;letter-spacing:-0.050px;">124743</span>
<span class="t" style="left:232.34px;top:349px;line-height:7px;font-size:6.55px;color:#1a1a1a;letter-spacing:-0.050px;">198664</span>
<span class="t" style="left:266.83px;top:349px;line-height:7px;font-size:6.55px;color:#1a1a1a;letter-spacing:-0.050px;">119723</span>
<span class="t" style="left:299.84px;top:349px;line-height:7px;font-size:6.55px;color:#1a1a1a;letter-spacing:-0.050px;">193866</span>
<span class="t" style="left:337.34px;top:349px;line-height:7px;font-size:6.55px;color:#1a1a1a;letter-spacing:-0.050px;">636996</span>
<span class="t" style="left:372.94px;top:349px;line-height:7px;font-size:6.55px;color:#1a1a1a;letter-spacing:-0.050px;">74143</span>
<span class="t" style="left:52.80px;top:358px;line-height:7px;font-size:6.55px;color:#1a1a1a;letter-spacing:-0.241px;font-weight:bold;">United Kingdom</span>
<span class="t" style="left:136.34px;top:358px;line-height:7px;font-size:6.55px;color:#1a1a1a;letter-spacing:-0.050px;font-weight:bold;">823481</span>
<span class="t" style="left:165.34px;top:358px;line-height:7px;font-size:6.55px;color:#1a1a1a;letter-spacing:-0.050px;font-weight:bold;">834885</span>
<span class="t" style="left:195.25px;top:358px;line-height:7px;font-size:6.55px;color:#1a1a1a;letter-spacing:-0.050px;font-weight:bold;">1868796</span>
<span class="t" style="left:228.75px;top:358px;line-height:7px;font-size:6.55px;color:#1a1a1a;letter-spacing:-0.050px;font-weight:bold;">2014044</span>
<span class="t" style="left:262.75px;top:358px;line-height:7px;font-size:6.55px;color:#1a1a1a;letter-spacing:-0.050px;font-weight:bold;">2484181</span>
<span class="t" style="left:296.25px;top:358px;line-height:7px;font-size:6.55px;color:#1a1a1a;letter-spacing:-0.050px;font-weight:bold;">2620809</span>
<span class="t" style="left:330.16px;top:358px;line-height:7px;font-size:6.55px;color:#1a1a1a;letter-spacing:-0.050px;font-weight:bold;">10646196</span>
<span class="t" style="left:369.34px;top:358px;line-height:7px;font-size:6.55px;color:#1a1a1a;letter-spacing:-0.050px;">136628</span>
<span class="t" style="left:59.70px;top:367px;line-height:7px;font-size:6.55px;color:#1a1a1a;letter-spacing:-0.110px;">Accessories</span>
<span class="t" style="left:198.84px;top:367px;line-height:7px;font-size:6.55px;color:#1a1a1a;letter-spacing:-0.050px;">402401</span>
<span class="t" style="left:232.34px;top:367px;line-height:7px;font-size:6.55px;color:#1a1a1a;letter-spacing:-0.050px;">549347</span>
<span class="t" style="left:266.34px;top:367px;line-height:7px;font-size:6.55px;color:#1a1a1a;letter-spacing:-0.050px;">388624</span>
<span class="t" style="left:299.84px;top:367px;line-height:7px;font-size:6.55px;color:#1a1a1a;letter-spacing:-0.050px;">532651</span>
<span class="t" style="left:333.75px;top:367px;line-height:7px;font-size:6.55px;color:#1a1a1a;letter-spacing:-0.050px;">1873023</span>
<span class="t" style="left:369.34px;top:367px;line-height:7px;font-size:6.55px;color:#1a1a1a;letter-spacing:-0.050px;">144027</span>
<span class="t" style="left:59.70px;top:376px;line-height:7px;font-size:6.55px;color:#1a1a1a;letter-spacing:-0.203px;">Bikes</span>
<span class="t" style="left:136.34px;top:376px;line-height:7px;font-size:6.55px;color:#1a1a1a;letter-spacing:-0.050px;">823481</span>
<span class="t" style="left:165.34px;top:376px;line-height:7px;font-size:6.55px;color:#1a1a1a;letter-spacing:-0.050px;">834885</span>
<span class="t" style="left:195.25px;top:376px;line-height:7px;font-size:6.55px;color:#1a1a1a;letter-spacing:-0.050px;">1262663</span>
<span class="t" style="left:228.75px;top:376px;line-height:7px;font-size:6.55px;color:#1a1a1a;letter-spacing:-0.050px;">1202055</span>
<span class="t" style="left:262.75px;top:376px;line-height:7px;font-size:6.55px;color:#1a1a1a;letter-spacing:-0.050px;">1900942</span>
<span class="t" style="left:296.25px;top:376px;line-height:7px;font-size:6.55px;color:#1a1a1a;letter-spacing:-0.050px;">1832968</span>
<span class="t" style="left:333.75px;top:376px;line-height:7px;font-size:6.55px;color:#1a1a1a;letter-spacing:-0.050px;">7856994</span>
<span class="t" style="left:370.80px;top:376px;line-height:7px;font-size:6.55px;color:#1a1a1a;letter-spacing:-0.050px;">-67974</span>
<span class="t" style="left:59.70px;top:385px;line-height:7px;font-size:6.55px;color:#1a1a1a;letter-spacing:-0.016px;">Clothing</span>
<span class="t" style="left:198.84px;top:385px;line-height:7px;font-size:6.55px;color:#1a1a1a;letter-spacing:-0.050px;">203732</span>
<span class="t" style="left:232.34px;top:385px;line-height:7px;font-size:6.55px;color:#1a1a1a;letter-spacing:-0.050px;">262642</span>
<span class="t" style="left:266.34px;top:385px;line-height:7px;font-size:6.55px;color:#1a1a1a;letter-spacing:-0.050px;">194615</span>
<span class="t" style="left:299.84px;top:385px;line-height:7px;font-size:6.55px;color:#1a1a1a;letter-spacing:-0.050px;">255190</span>
<span class="t" style="left:337.34px;top:385px;line-height:7px;font-size:6.55px;color:#1a1a1a;letter-spacing:-0.050px;">916179</span>
<span class="t" style="left:372.94px;top:385px;line-height:7px;font-size:6.55px;color:#1a1a1a;letter-spacing:-0.050px;">60575</span>
<span class="t" style="left:52.80px;top:394px;line-height:7px;font-size:6.55px;color:#1a1a1a;letter-spacing:-0.127px;font-weight:bold;">United States</span>
<span class="t" style="left:132.75px;top:394px;line-height:7px;font-size:6.55px;color:#1a1a1a;letter-spacing:-0.050px;font-weight:bold;">3041468</span>
<span class="t" style="left:161.75px;top:394px;line-height:7px;font-size:6.55px;color:#1a1a1a;letter-spacing:-0.050px;font-weight:bold;">3150719</span>
<span class="t" style="left:195.25px;top:394px;line-height:7px;font-size:6.55px;color:#1a1a1a;letter-spacing:-0.050px;font-weight:bold;">4935660</span>
<span class="t" style="left:228.75px;top:394px;line-height:7px;font-size:6.55px;color:#1a1a1a;letter-spacing:-0.050px;font-weight:bold;">4750708</span>
<span class="t" style="left:262.75px;top:394px;line-height:7px;font-size:6.55px;color:#1a1a1a;letter-spacing:-0.050px;font-weight:bold;">6286498</span>
<span class="t" style="left:296.25px;top:394px;line-height:7px;font-size:6.55px;color:#1a1a1a;letter-spacing:-0.050px;font-weight:bold;">5810494</span>
<span class="t" style="left:330.16px;top:394px;line-height:7px;font-size:6.55px;color:#1a1a1a;letter-spacing:-0.050px;font-weight:bold;">27975547</span>
<span class="t" style="left:367.21px;top:394px;line-height:7px;font-size:6.55px;color:#1a1a1a;letter-spacing:-0.050px;">-476004</span>
<span class="t" style="left:59.70px;top:403px;line-height:7px;font-size:6.55px;color:#1a1a1a;letter-spacing:-0.110px;">Accessories</span>
<span class="t" style="left:195.25px;top:403px;line-height:7px;font-size:6.55px;color:#1a1a1a;letter-spacing:-0.050px;">1210902</span>
<span class="t" style="left:228.75px;top:403px;line-height:7px;font-size:6.55px;color:#1a1a1a;letter-spacing:-0.050px;">1472347</span>
<span class="t" style="left:263.24px;top:403px;line-height:7px;font-size:6.55px;color:#1a1a1a;letter-spacing:-0.050px;">1175590</span>
<span class="t" style="left:296.25px;top:403px;line-height:7px;font-size:6.55px;color:#1a1a1a;letter-spacing:-0.050px;">1419914</span>
<span class="t" style="left:333.75px;top:403px;line-height:7px;font-size:6.55px;color:#1a1a1a;letter-spacing:-0.050px;">5278753</span>
<span class="t" style="left:369.34px;top:403px;line-height:7px;font-size:6.55px;color:#1a1a1a;letter-spacing:-0.050px;">244324</span>
<span class="t" style="left:59.70px;top:412px;line-height:7px;font-size:6.55px;color:#1a1a1a;letter-spacing:-0.203px;">Bikes</span>
<span class="t" style="left:132.75px;top:412px;line-height:7px;font-size:6.55px;color:#1a1a1a;letter-spacing:-0.050px;">3041468</span>
<span class="t" style="left:161.75px;top:412px;line-height:7px;font-size:6.55px;color:#1a1a1a;letter-spacing:-0.050px;">3150719</span>
<span class="t" style="left:195.25px;top:412px;line-height:7px;font-size:6.55px;color:#1a1a1a;letter-spacing:-0.050px;">2981744</span>
<span class="t" style="left:228.75px;top:412px;line-height:7px;font-size:6.55px;color:#1a1a1a;letter-spacing:-0.050px;">2441639</span>
<span class="t" style="left:262.75px;top:412px;line-height:7px;font-size:6.55px;color:#1a1a1a;letter-spacing:-0.050px;">4387921</span>
<span class="t" style="left:296.25px;top:412px;line-height:7px;font-size:6.55px;color:#1a1a1a;letter-spacing:-0.050px;">3576921</span>
<span class="t" style="left:330.16px;top:412px;line-height:7px;font-size:6.55px;color:#1a1a1a;letter-spacing:-0.050px;">19580412</span>
<span class="t" style="left:367.70px;top:412px;line-height:7px;font-size:6.55px;color:#1a1a1a;letter-spacing:-0.050px;">-811000</span>
<span class="t" style="left:59.70px;top:421px;line-height:7px;font-size:6.55px;color:#1a1a1a;letter-spacing:-0.016px;">Clothing</span>
<span class="t" style="left:198.84px;top:421px;line-height:7px;font-size:6.55px;color:#1a1a1a;letter-spacing:-0.050px;">743014</span>
<span class="t" style="left:232.34px;top:421px;line-height:7px;font-size:6.55px;color:#1a1a1a;letter-spacing:-0.050px;">836722</span>
<span class="t" style="left:266.34px;top:421px;line-height:7px;font-size:6.55px;color:#1a1a1a;letter-spacing:-0.050px;">722987</span>
<span class="t" style="left:299.84px;top:421px;line-height:7px;font-size:6.55px;color:#1a1a1a;letter-spacing:-0.050px;">813659</span>
<span class="t" style="left:334.24px;top:421px;line-height:7px;font-size:6.55px;color:#1a1a1a;letter-spacing:-0.050px;">3116382</span>
<span class="t" style="left:372.94px;top:421px;line-height:7px;font-size:6.55px;color:#1a1a1a;letter-spacing:-0.050px;">90672</span>
<span class="t" style="left:45.80px;top:431px;line-height:7px;font-size:6.55px;color:#1a1a1a;letter-spacing:-0.188px;font-weight:bold;">Grand Total</span>
<span class="t" style="left:132.75px;top:431px;line-height:7px;font-size:6.55px;color:#1a1a1a;letter-spacing:-0.050px;font-weight:bold;">8964888</span>
<span class="t" style="left:161.75px;top:431px;line-height:7px;font-size:6.55px;color:#1a1a1a;letter-spacing:-0.050px;font-weight:bold;">9175983</span>
<span class="t" style="left:191.66px;top:431px;line-height:7px;font-size:6.55px;color:#1a1a1a;letter-spacing:-0.050px;font-weight:bold;">15240037</span>
<span class="t" style="left:225.16px;top:431px;line-height:7px;font-size:6.55px;color:#1a1a1a;letter-spacing:-0.050px;font-weight:bold;">14152724</span>
<span class="t" style="left:259.16px;top:431px;line-height:7px;font-size:6.55px;color:#1a1a1a;letter-spacing:-0.050px;font-weight:bold;">20023991</span>
<span class="t" style="left:292.66px;top:431px;line-height:7px;font-size:6.55px;color:#1a1a1a;letter-spacing:-0.050px;font-weight:bold;">17713385</span>
<span class="t" style="left:330.16px;top:431px;line-height:7px;font-size:6.55px;color:#1a1a1a;letter-spacing:-0.050px;font-weight:bold;">85271008</span>
<span class="t" style="left:363.62px;top:431px;line-height:7px;font-size:6.55px;color:#1a1a1a;letter-spacing:-0.050px;">-2310606</span>
<span class="t" style="left:393.90px;top:213px;line-height:7px;font-size:6.55px;color:#222;letter-spacing:-0.050px;">=<span style="color:#4f81d8">J7</span>/<span style="color:#d9706b">G7</span></span>
<span class="t" style="left:62.33px;top:547px;line-height:10px;font-size:9.10px;color:#444;letter-spacing:-0.206px;">Data</span>
<span class="t" style="left:95.43px;top:547px;line-height:10px;font-size:9.10px;color:#444;letter-spacing:-0.226px;">Pivot</span>
<span class="t" style="left:130.43px;top:547px;line-height:10px;font-size:9.10px;color:#444;letter-spacing:-0.146px;">Dashboard</span>
<span class="t" style="left:188.83px;top:547px;line-height:10px;font-size:9.10px;color:#217346;letter-spacing:-0.177px;font-weight:bold;">Details</span>
<span class="t" style="left:4.29px;top:565px;line-height:7px;font-size:7.00px;color:#444444;letter-spacing:-0.191px;">Point</span>
<span class="t" style="left:1006.50px;top:564px;line-height:7px;font-size:6.60px;color:#a0a0a0;letter-spacing:-0.270px;">72%</span>
</div>
</body></html>
